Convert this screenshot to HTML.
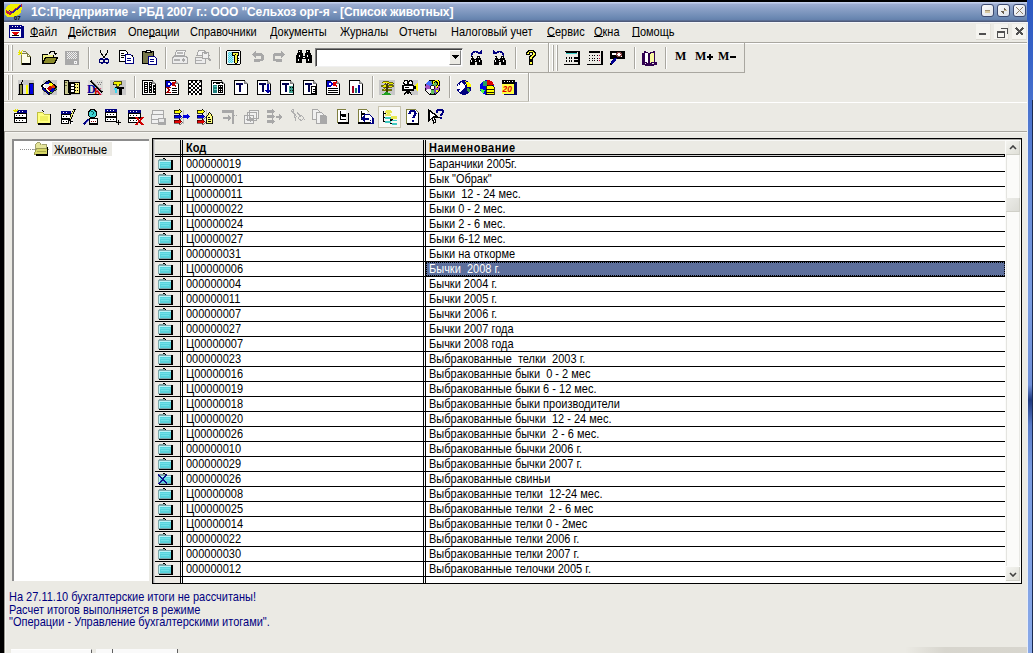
<!DOCTYPE html><html><head><meta charset="utf-8"><style>
*{margin:0;padding:0;box-sizing:border-box}
html,body{width:1033px;height:653px;overflow:hidden;background:#ebeae4;font-family:"Liberation Sans",sans-serif;font-size:11px;color:#000;position:relative}
.a{position:absolute}
.t{white-space:nowrap;line-height:14px;transform:scaleY(1.13);transform-origin:0 0}
</style></head><body>
<div class="a" style="left:0px;top:0px;width:4px;height:653px;background:#000;"></div>
<div class="a" style="left:0px;top:0px;width:1033px;height:2px;background:#000;"></div>
<div class="a" style="left:4px;top:2px;width:1023px;height:20px;background:;background:linear-gradient(#c4d0ec 0px,#c4d0ec 1px,#9eaed2 2px,#8da2c8 6px,#6a88b2 16px,#6580ac 18px,#4e5a78 19px)"></div>
<div class="a" style="left:1027px;top:0px;width:6px;height:653px;background:;background:linear-gradient(#2c58c0 0px,#3864c8 60px,#6a8ed8 200px,#7b9de0 300px,#7090d8 385px,#203a80 400px,#5a7cc8 425px,#7b9de0 470px,#88a8e8 653px)"></div>
<div class="a" style="left:1032px;top:100px;width:1px;height:553px;background:#1a2a50;"></div>
<div class="a" style="left:1027px;top:22px;width:1px;height:631px;background:#e8eef8;"></div>
<div class="a t" style="left:31px;top:4.5px;color:#fff;font-weight:bold;font-size:12px;letter-spacing:-0.09px;transform:none">1С:Предприятие - РБД 2007 г.: ООО "Сельхоз орг-я - [Список животных]</div>
<div class="a" style="left:4px;top:22px;width:1023px;height:1px;background:#f4f6fa;"></div>
<div class="a" style="left:4px;top:42px;width:1023px;height:1px;background:#a9a7a0;"></div>
<div class="a" style="left:4px;top:43px;width:1023px;height:1px;background:#fff;"></div>
<div class="a" style="left:4px;top:72px;width:741px;height:1px;background:#a9a7a0;"></div>
<div class="a" style="left:4px;top:73px;width:525px;height:1px;background:#fff;"></div>
<div class="a" style="left:4px;top:101px;width:525px;height:1px;background:#c8c6bc;"></div>
<div class="a" style="left:4px;top:102px;width:1023px;height:1px;background:#fff;"></div>
<div class="a" style="left:4px;top:131px;width:1023px;height:1px;background:#a9a7a0;"></div>
<div class="a" style="left:4px;top:131px;width:1px;height:522px;background:#9a9890;"></div>
<div class="a" style="left:5px;top:132px;width:1px;height:521px;background:#f6f6f2;"></div>
<div class="a" style="left:5px;top:132px;width:1022px;height:1px;background:#f6f6f2;"></div>
<div class="a" style="left:548px;top:43px;width:1px;height:29px;background:#a9a7a0;"></div>
<div class="a" style="left:549px;top:43px;width:1px;height:29px;background:#fff;"></div>
<div class="a" style="left:744px;top:43px;width:1px;height:29px;background:#a9a7a0;"></div>
<div class="a" style="left:528px;top:73px;width:1px;height:28px;background:#a9a7a0;"></div>
<div class="a" style="left:529px;top:73px;width:1px;height:28px;background:#fff;"></div>
<div class="a" style="left:7px;top:45px;width:1px;height:26px;background:#fff;"></div>
<div class="a" style="left:8px;top:45px;width:1px;height:26px;background:#a9a7a0;"></div>
<div class="a" style="left:11px;top:45px;width:1px;height:26px;background:#fff;"></div>
<div class="a" style="left:12px;top:45px;width:1px;height:26px;background:#a9a7a0;"></div>
<div class="a" style="left:552px;top:45px;width:1px;height:26px;background:#fff;"></div>
<div class="a" style="left:553px;top:45px;width:1px;height:26px;background:#a9a7a0;"></div>
<div class="a" style="left:556px;top:45px;width:1px;height:26px;background:#fff;"></div>
<div class="a" style="left:557px;top:45px;width:1px;height:26px;background:#a9a7a0;"></div>
<div class="a" style="left:7px;top:75px;width:1px;height:25px;background:#fff;"></div>
<div class="a" style="left:8px;top:75px;width:1px;height:25px;background:#a9a7a0;"></div>
<div class="a" style="left:11px;top:75px;width:1px;height:25px;background:#fff;"></div>
<div class="a" style="left:12px;top:75px;width:1px;height:25px;background:#a9a7a0;"></div>
<div class="a" style="left:88px;top:47px;width:1px;height:22px;background:#a9a7a0;"></div>
<div class="a" style="left:89px;top:47px;width:1px;height:22px;background:#fff;"></div>
<div class="a" style="left:165px;top:47px;width:1px;height:22px;background:#a9a7a0;"></div>
<div class="a" style="left:166px;top:47px;width:1px;height:22px;background:#fff;"></div>
<div class="a" style="left:219px;top:47px;width:1px;height:22px;background:#a9a7a0;"></div>
<div class="a" style="left:220px;top:47px;width:1px;height:22px;background:#fff;"></div>
<div class="a" style="left:515px;top:47px;width:1px;height:22px;background:#a9a7a0;"></div>
<div class="a" style="left:516px;top:47px;width:1px;height:22px;background:#fff;"></div>
<div class="a" style="left:634px;top:47px;width:1px;height:22px;background:#a9a7a0;"></div>
<div class="a" style="left:635px;top:47px;width:1px;height:22px;background:#fff;"></div>
<div class="a" style="left:665px;top:47px;width:1px;height:22px;background:#a9a7a0;"></div>
<div class="a" style="left:666px;top:47px;width:1px;height:22px;background:#fff;"></div>
<div class="a" style="left:134px;top:76px;width:1px;height:22px;background:#a9a7a0;"></div>
<div class="a" style="left:135px;top:76px;width:1px;height:22px;background:#fff;"></div>
<div class="a" style="left:372px;top:76px;width:1px;height:22px;background:#a9a7a0;"></div>
<div class="a" style="left:373px;top:76px;width:1px;height:22px;background:#fff;"></div>
<div class="a" style="left:449px;top:76px;width:1px;height:22px;background:#a9a7a0;"></div>
<div class="a" style="left:450px;top:76px;width:1px;height:22px;background:#fff;"></div>
<svg class="a" style="left:18px;top:50px" width="16" height="16" viewBox="0 0 16 16" shape-rendering="crispEdges"><path d="M3.5 3.5h6l3 3v7.5h-9z" fill="#fdfde8" stroke="#808040" stroke-width="1" /><path d="M12.5 6.5v7.5h-9" fill="none" stroke="#000" stroke-width="1.3" /><path d="M9.5 3.5v3h3" fill="none" stroke="#808040" stroke-width="1" /><path d="M0 2.5h3M1.5 0.5l1 2.5M4.5 0.5l-2 2.5M0.5 5l2-2M3 3l1 2" fill="none" stroke="#e8e800" stroke-width="1.1" /><path d="M5 1.5h3l1 1" fill="none" stroke="#808040" stroke-width="0.9" /><rect x="2" y="3" width="1" height="1" fill="#808040"/></svg>
<svg class="a" style="left:42px;top:50px" width="16" height="16" viewBox="0 0 16 16" shape-rendering="crispEdges"><path d="M0.5 13.5v-9.5h4l1 1h6v2" fill="#f0f088" stroke="#000" stroke-width="1" /><rect x="1" y="5" width="10" height="3" fill="#f0f088"/><path d="M0.5 13.5l3-6h12l-3 6z" fill="#8a8a2a" stroke="#000" stroke-width="1" /><path d="M7 4c1-3 4.5-3.5 6-1.5" fill="none" stroke="#000" stroke-width="1.2" /><path d="M11 2.5h4.5l-2.2 3z" fill="#000" stroke="none" stroke-width="1" /></svg>
<svg class="a" style="left:64px;top:50px" width="16" height="16" viewBox="0 0 16 16" shape-rendering="crispEdges"><rect x="1" y="1" width="14" height="14" fill="#a9a9a9"/><rect x="3" y="2" width="1" height="1" fill="#f0f0f0"/><rect x="5" y="2" width="1" height="1" fill="#f0f0f0"/><rect x="7" y="2" width="1" height="1" fill="#f0f0f0"/><rect x="9" y="2" width="1" height="1" fill="#f0f0f0"/><rect x="11" y="2" width="1" height="1" fill="#f0f0f0"/><rect x="4" y="3" width="1" height="1" fill="#f0f0f0"/><rect x="6" y="3" width="1" height="1" fill="#f0f0f0"/><rect x="8" y="3" width="1" height="1" fill="#f0f0f0"/><rect x="10" y="3" width="1" height="1" fill="#f0f0f0"/><rect x="12" y="3" width="1" height="1" fill="#f0f0f0"/><rect x="3" y="4" width="1" height="1" fill="#f0f0f0"/><rect x="5" y="4" width="1" height="1" fill="#f0f0f0"/><rect x="7" y="4" width="1" height="1" fill="#f0f0f0"/><rect x="9" y="4" width="1" height="1" fill="#f0f0f0"/><rect x="11" y="4" width="1" height="1" fill="#f0f0f0"/><rect x="4" y="5" width="1" height="1" fill="#f0f0f0"/><rect x="6" y="5" width="1" height="1" fill="#f0f0f0"/><rect x="8" y="5" width="1" height="1" fill="#f0f0f0"/><rect x="10" y="5" width="1" height="1" fill="#f0f0f0"/><rect x="12" y="5" width="1" height="1" fill="#f0f0f0"/><rect x="3" y="6" width="1" height="1" fill="#f0f0f0"/><rect x="5" y="6" width="1" height="1" fill="#f0f0f0"/><rect x="7" y="6" width="1" height="1" fill="#f0f0f0"/><rect x="9" y="6" width="1" height="1" fill="#f0f0f0"/><rect x="11" y="6" width="1" height="1" fill="#f0f0f0"/><rect x="4" y="7" width="1" height="1" fill="#f0f0f0"/><rect x="6" y="7" width="1" height="1" fill="#f0f0f0"/><rect x="8" y="7" width="1" height="1" fill="#f0f0f0"/><rect x="10" y="7" width="1" height="1" fill="#f0f0f0"/><rect x="12" y="7" width="1" height="1" fill="#f0f0f0"/><rect x="3" y="8" width="1" height="1" fill="#f0f0f0"/><rect x="5" y="8" width="1" height="1" fill="#f0f0f0"/><rect x="7" y="8" width="1" height="1" fill="#f0f0f0"/><rect x="9" y="8" width="1" height="1" fill="#f0f0f0"/><rect x="11" y="8" width="1" height="1" fill="#f0f0f0"/><rect x="10" y="11" width="3" height="3" fill="#f4f4f4"/><rect x="11" y="12" width="1" height="1" fill="#a9a9a9"/></svg>
<svg class="a" style="left:99px;top:50px" width="16" height="16" viewBox="0 0 16 16" shape-rendering="crispEdges"><path d="M1.5 0v2l4 6.5M8.5 0v2l-4 6.5" fill="none" stroke="#000" stroke-width="1.1" /><circle cx="2.6" cy="11" r="2.1" fill="none" stroke="#000070" stroke-width="1.2"/><circle cx="7.6" cy="11" r="2.1" fill="none" stroke="#000070" stroke-width="1.2"/></svg>
<svg class="a" style="left:119px;top:50px" width="16" height="16" viewBox="0 0 16 16" shape-rendering="crispEdges"><path d="M0.5 0.5h6l2 2v8.5h-8z" fill="#fff" stroke="#000" stroke-width="1" /><rect x="2" y="3" width="3" height="1" fill="#000"/><rect x="2" y="5" width="4" height="1" fill="#000"/><rect x="2" y="7" width="3" height="1" fill="#000"/><path d="M6.5 4.5h5l2.5 2.5v6.5h-7.5z" fill="#fff" stroke="#000080" stroke-width="1" /><rect x="8" y="8" width="4" height="1" fill="#000080"/><rect x="8" y="10" width="4" height="1" fill="#000080"/><rect x="12.5" y="5" width="1" height="2" fill="#000"/></svg>
<svg class="a" style="left:142px;top:50px" width="16" height="16" viewBox="0 0 16 16" shape-rendering="crispEdges"><path d="M0.5 1.5h11v11.5h-11z" fill="#77774a" stroke="#000" stroke-width="1" /><path d="M3.5 2.5l1.5-2h3l1.5 2z" fill="#fff" stroke="#000" stroke-width="1" /><path d="M6.5 6.5h6l2 2v5.5h-8z" fill="#fff" stroke="#000080" stroke-width="1" /><rect x="8" y="9" width="4" height="1" fill="#000080"/><rect x="8" y="11" width="4" height="1" fill="#000080"/></svg>
<svg class="a" style="left:172px;top:50px" width="16" height="16" viewBox="0 0 16 16" shape-rendering="crispEdges"><path d="M4.5 0.5h9l-1.5 5h-9z" fill="#f4f4f4" stroke="#a8a8a8" stroke-width="1" /><path d="M5 2h6M4.5 3.5h6" fill="none" stroke="#b8b8b8" stroke-width="1" /><path d="M1.5 6.5h13l1 2v5h-15v-5z" fill="#ececec" stroke="#a8a8a8" stroke-width="1" /><rect x="2" y="9" width="6" height="2" fill="#b0b0b0"/><circle cx="11.5" cy="10" r="1.6" fill="#a8a8a8"/><rect x="3" y="13" width="10" height="1" fill="#a8a8a8"/></svg>
<svg class="a" style="left:195px;top:50px" width="16" height="16" viewBox="0 0 16 16" shape-rendering="crispEdges"><path d="M3.5 0.5h6l-1.5 5h-6z" fill="#f4f4f4" stroke="#a8a8a8" stroke-width="1" /><path d="M0.5 7.5h10v6h-10z" fill="#ececec" stroke="#a8a8a8" stroke-width="1" /><rect x="1" y="10" width="6" height="1" fill="#b0b0b0"/><rect x="2" y="13" width="8" height="1" fill="#a8a8a8"/><circle cx="10.5" cy="5.5" r="3.5" fill="#f0f0f0" stroke="#a8a8a8" stroke-width="1.2"/><path d="M13 8l3 3" fill="none" stroke="#a8a8a8" stroke-width="1.8" /><path d="M9.5 4a1 1 0 0 1 2 0" fill="none" stroke="#a8a8a8" stroke-width="1" /></svg>
<svg class="a" style="left:226px;top:50px" width="16" height="16" viewBox="0 0 16 16" shape-rendering="crispEdges"><rect x="0" y="0" width="15" height="15" fill="#000"/><rect x="1" y="1" width="13" height="13" fill="#f0fafa"/><rect x="0" y="0" width="1" height="1" fill="#ebeae4"/><rect x="14" y="0" width="1" height="1" fill="#ebeae4"/><rect x="0" y="14" width="1" height="1" fill="#ebeae4"/><rect x="14" y="14" width="1" height="1" fill="#ebeae4"/><rect x="2" y="2" width="5" height="11" fill="#50cce0"/><rect x="2" y="2" width="1" height="1" fill="#a8f0f8"/><rect x="4" y="2" width="1" height="1" fill="#a8f0f8"/><rect x="6" y="2" width="1" height="1" fill="#a8f0f8"/><rect x="3" y="3" width="1" height="1" fill="#a8f0f8"/><rect x="5" y="3" width="1" height="1" fill="#a8f0f8"/><rect x="7" y="3" width="1" height="1" fill="#a8f0f8"/><rect x="2" y="4" width="1" height="1" fill="#a8f0f8"/><rect x="4" y="4" width="1" height="1" fill="#a8f0f8"/><rect x="6" y="4" width="1" height="1" fill="#a8f0f8"/><rect x="3" y="5" width="1" height="1" fill="#a8f0f8"/><rect x="5" y="5" width="1" height="1" fill="#a8f0f8"/><rect x="7" y="5" width="1" height="1" fill="#a8f0f8"/><rect x="2" y="6" width="1" height="1" fill="#a8f0f8"/><rect x="4" y="6" width="1" height="1" fill="#a8f0f8"/><rect x="6" y="6" width="1" height="1" fill="#a8f0f8"/><rect x="3" y="7" width="1" height="1" fill="#a8f0f8"/><rect x="5" y="7" width="1" height="1" fill="#a8f0f8"/><rect x="7" y="7" width="1" height="1" fill="#a8f0f8"/><rect x="2" y="8" width="1" height="1" fill="#a8f0f8"/><rect x="4" y="8" width="1" height="1" fill="#a8f0f8"/><rect x="6" y="8" width="1" height="1" fill="#a8f0f8"/><rect x="3" y="9" width="1" height="1" fill="#a8f0f8"/><rect x="5" y="9" width="1" height="1" fill="#a8f0f8"/><rect x="7" y="9" width="1" height="1" fill="#a8f0f8"/><rect x="2" y="10" width="1" height="1" fill="#a8f0f8"/><rect x="4" y="10" width="1" height="1" fill="#a8f0f8"/><rect x="6" y="10" width="1" height="1" fill="#a8f0f8"/><rect x="3" y="11" width="1" height="1" fill="#a8f0f8"/><rect x="5" y="11" width="1" height="1" fill="#a8f0f8"/><rect x="7" y="11" width="1" height="1" fill="#a8f0f8"/><rect x="2" y="12" width="1" height="1" fill="#a8f0f8"/><rect x="4" y="12" width="1" height="1" fill="#a8f0f8"/><rect x="6" y="12" width="1" height="1" fill="#a8f0f8"/><path d="M6.5 2.5h6v2.5l-1 1v6.5l-1.5 1.5-1.5-1.5v-6.5l-2-1z" fill="#f8f840" stroke="#000" stroke-width="1" /><rect x="9" y="3.5" width="1" height="1" fill="#000"/><rect x="11" y="8" width="2" height="1" fill="#000"/><rect x="11" y="10" width="2" height="1" fill="#000"/></svg>
<svg class="a" style="left:251px;top:50px" width="16" height="16" viewBox="0 0 16 16" shape-rendering="crispEdges"><path d="M0.5 4.5l4-4v2.5h4.5a4.2 4.2 0 0 1 0 8.5h-6v-2.8h6a1.4 1.4 0 0 0 0-2.8h-4.5v2.6z" fill="#a8a8a8" stroke="none" stroke-width="1" /></svg>
<svg class="a" style="left:273px;top:50px" width="16" height="16" viewBox="0 0 16 16" shape-rendering="crispEdges"><path d="M11.5 4.5l-4-4v2.5h-4.5a4.2 4.2 0 0 0 0 8.5h6v-2.8h-6a1.4 1.4 0 0 1 0-2.8h4.5v2.6z" fill="#a8a8a8" stroke="none" stroke-width="1" /></svg>
<svg class="a" style="left:296px;top:50px" width="16" height="16" viewBox="0 0 16 16" shape-rendering="crispEdges"><path d="M2 0h4v3h1v3h2v-3h1v-3h4v3h1v2h1v8h-6v-4h-4v4h-6v-8h1v-2h1z" fill="#000" stroke="none" stroke-width="1" /><rect x="3" y="5" width="1" height="2" fill="#fff"/><rect x="11" y="5" width="1" height="2" fill="#fff"/><rect x="2" y="9" width="1" height="2" fill="#fff"/><rect x="12" y="9" width="1" height="2" fill="#fff"/><rect x="7" y="7" width="2" height="1" fill="#fff"/><rect x="3" y="1" width="1" height="1" fill="#fff"/><rect x="11" y="1" width="1" height="1" fill="#fff"/></svg>
<div class="a" style="left:315px;top:48px;width:148px;height:19px;background:#fff;border-top:1px solid #808080;border-left:1px solid #808080;border-right:1px solid #f0f0f0;border-bottom:1px solid #f0f0f0;box-shadow:inset 1px 1px 0 #404040"></div>
<div class="a" style="left:449px;top:50px;width:12px;height:15px;background:#ebeae4;border-right:1px solid #808080;border-bottom:1px solid #808080;border-top:1px solid #fff;border-left:1px solid #fff"></div>
<svg class="a" style="left:452px;top:55px" width="8" height="5" viewBox="0 0 8 5" shape-rendering="crispEdges"><path d="M0 0h7l-3.5 4z" fill="#000" stroke="none" stroke-width="1" /></svg>
<svg class="a" style="left:468px;top:50px" width="16" height="16" viewBox="0 0 16 16" shape-rendering="crispEdges"><path d="M2 6h3v2h1v1h2v-1h1v-2h3v2h1v2h1v5h-5v-3h-2v3h-5v-5h1v-2h1z" fill="#000" stroke="none" stroke-width="1" /><rect x="3" y="10" width="1" height="2" fill="#fff"/><rect x="11" y="10" width="1" height="2" fill="#fff"/><rect x="7" y="10" width="1" height="1" fill="#fff"/><rect x="3" y="7" width="1" height="1" fill="#fff"/><rect x="10" y="7" width="1" height="1" fill="#fff"/><path d="M3.5 5.5c0-4 6-5.5 8-1.5" fill="none" stroke="#000080" stroke-width="1.5" /><path d="M9 4h5v-4z" fill="#000080" stroke="none" stroke-width="1" /></svg>
<svg class="a" style="left:492px;top:50px" width="16" height="16" viewBox="0 0 16 16" shape-rendering="crispEdges"><path d="M2 6h3v2h1v1h2v-1h1v-2h3v2h1v2h1v5h-5v-3h-2v3h-5v-5h1v-2h1z" fill="#000" stroke="none" stroke-width="1" /><rect x="3" y="10" width="1" height="2" fill="#fff"/><rect x="11" y="10" width="1" height="2" fill="#fff"/><rect x="7" y="10" width="1" height="1" fill="#fff"/><rect x="3" y="7" width="1" height="1" fill="#fff"/><rect x="10" y="7" width="1" height="1" fill="#fff"/><path d="M11.5 5.5c0-4-6-5.5-8-1.5" fill="none" stroke="#000080" stroke-width="1.5" /><path d="M6 4h-5v-4z" fill="#000080" stroke="none" stroke-width="1" /></svg>
<svg class="a" style="left:524px;top:50px" width="16" height="16" viewBox="0 0 16 16" shape-rendering="crispEdges"><path d="M2.5 4.5c0-3 2.5-4 4.5-4s4.5 1 4.5 3.5c0 2.5-3 2.5-3 5v1h-3v-1.5c0-3 3-3 3-4.5c0-1-0.5-1.5-1.5-1.5s-1.5 0.6-1.5 2z" fill="#ffff40" stroke="#000" stroke-width="1.2" /><path d="M5.5 11.5h3v3h-3z" fill="#ffff40" stroke="#000" stroke-width="1.2" /></svg>
<svg class="a" style="left:564px;top:50px" width="16" height="16" viewBox="0 0 16 16" shape-rendering="crispEdges"><path d="M0.5 1.5h14.5v12.5h-15" fill="none" stroke="#000" stroke-width="1" /><path d="M15 1v13.5h-15" fill="none" stroke="#000" stroke-width="1.5" /><rect x="2" y="2" width="11" height="2" fill="#40d0c8"/><rect x="2" y="2" width="11" height="0.8" fill="#000"/><rect x="2.0" y="7" width="1.3" height="1.5" fill="#000"/><rect x="4.5" y="7" width="1.3" height="1.5" fill="#000"/><rect x="7.0" y="7" width="1.3" height="1.5" fill="#000"/><rect x="9.5" y="7" width="1.3" height="1.5" fill="#000"/><rect x="2.0" y="10" width="1.3" height="1.5" fill="#000"/><rect x="4.5" y="10" width="1.3" height="1.5" fill="#000"/><rect x="7.0" y="10" width="1.3" height="1.5" fill="#000"/><rect x="9.5" y="10" width="1.3" height="1.5" fill="#000"/><rect x="11" y="7" width="2.5" height="1.5" fill="#000"/><rect x="11" y="10" width="2.5" height="1.5" fill="#000"/></svg>
<svg class="a" style="left:587px;top:50px" width="16" height="16" viewBox="0 0 16 16" shape-rendering="crispEdges"><path d="M15 1v13.5h-15" fill="none" stroke="#000" stroke-width="1.5" /><rect x="2" y="1" width="11" height="1.6" fill="#000"/><rect x="3" y="0.5" width="1" height="2" fill="#000"/><rect x="7" y="0.5" width="1" height="2" fill="#000"/><rect x="11" y="0.5" width="1" height="2" fill="#000"/><rect x="2.0" y="5.0" width="1" height="1" fill="#000"/><rect x="2.0" y="7.5" width="1" height="1" fill="#000"/><rect x="2.0" y="10.0" width="1" height="1" fill="#000"/><rect x="4.5" y="5.0" width="1" height="1" fill="#000"/><rect x="4.5" y="7.5" width="1" height="1" fill="#000"/><rect x="4.5" y="10.0" width="1" height="1" fill="#000"/><rect x="7.0" y="5.0" width="1" height="1" fill="#000"/><rect x="7.0" y="7.5" width="1" height="1" fill="#000"/><rect x="7.0" y="10.0" width="1" height="1" fill="#000"/><rect x="9.5" y="5.0" width="1" height="1" fill="#000"/><rect x="9.5" y="7.5" width="1" height="1" fill="#000"/><rect x="9.5" y="10.0" width="1" height="1" fill="#000"/><rect x="12.0" y="5.0" width="1" height="1" fill="#c00040"/><rect x="12.0" y="7.5" width="1" height="1" fill="#c00040"/><rect x="12.0" y="10.0" width="1" height="1" fill="#c00040"/></svg>
<svg class="a" style="left:609px;top:50px" width="16" height="16" viewBox="0 0 16 16" shape-rendering="crispEdges"><rect x="1" y="1" width="15" height="8" fill="#000"/><rect x="3" y="3" width="4" height="2" fill="#fff"/><rect x="8" y="3" width="5" height="4" fill="#fff"/><circle cx="10" cy="4.5" r="2.2" fill="none" stroke="#804040" stroke-width="1"/><path d="M7 8l-5 6" fill="none" stroke="#000090" stroke-width="2.5" /><path d="M2 14l-1 1" fill="none" stroke="#000" stroke-width="1.5" /></svg>
<svg class="a" style="left:642px;top:50px" width="16" height="16" viewBox="0 0 16 16" shape-rendering="crispEdges"><path d="M1 3v11l6 1.5 7-1.5v-2" fill="none" stroke="#300050" stroke-width="2" /><path d="M2.5 1.5l4.5 2v10.5l-4.5-2z" fill="#fff" stroke="#300050" stroke-width="1.2" /><path d="M7 3.5l5.5-2v10.5l-5.5 2z" fill="#f8f8a0" stroke="#300050" stroke-width="1.2" /></svg>
<div class="a" style="left:675px;top:49px;font:bold 12px 'Liberation Serif',serif;white-space:nowrap">M</div><div class="a" style="left:695px;top:49px;font:bold 12px 'Liberation Serif',serif;white-space:nowrap">M</div><div class="a" style="left:718px;top:49px;font:bold 12px 'Liberation Serif',serif;white-space:nowrap">M</div><div class="a" style="left:707px;top:56px;width:6px;height:2px;background:#000;"></div>
<div class="a" style="left:709px;top:54px;width:2px;height:6px;background:#000;"></div>
<div class="a" style="left:730px;top:56px;width:6px;height:2px;background:#000;"></div>
<svg class="a" style="left:18px;top:80px" width="16" height="16" viewBox="0 0 16 16" shape-rendering="crispEdges"><rect x="0" y="0" width="16" height="15" fill="#c8c8c8"/><rect x="1" y="4" width="3" height="10" fill="#8a8a40"/><path d="M1 4h3v10h-3z" fill="none" stroke="#000" stroke-width="1" /><rect x="5" y="5" width="3" height="9" fill="#e0e0e0"/><rect x="8" y="5" width="2" height="9" fill="#ffff00"/><rect x="11" y="3" width="4" height="11" fill="#0000e0"/><path d="M11 3h4v11h-4z" fill="none" stroke="#000" stroke-width="0.8" /><path d="M3 4l2-4" fill="none" stroke="#000" stroke-width="1.2" /><rect x="0" y="14" width="16" height="1" fill="#000"/></svg>
<svg class="a" style="left:41px;top:80px" width="16" height="16" viewBox="0 0 16 16" shape-rendering="crispEdges"><rect x="2" y="0" width="14" height="15" fill="#c8c8c8"/><path d="M0.5 6l7-5.5 8 6-7 6z" fill="#ffffff" stroke="#000" stroke-width="1.2" /><path d="M1 6l7 7v2l-7-6z" fill="#0000c0" stroke="#000" stroke-width="0.8" /><path d="M8 13l8-6v2l-8 6z" fill="#60c040" stroke="#000" stroke-width="0.8" /><path d="M4 3.5l3.5-2.5 2 1.5-3.5 2.5z" fill="#0000a0" stroke="none" stroke-width="1" /><path d="M9.5 2.5l2.5 2-3.5 2.5-2.5-2z" fill="#ffff00" stroke="none" stroke-width="1" /><path d="M12 4.5l3 2.5-3.5 2.5-2.5-2z" fill="#e04000" stroke="none" stroke-width="1" /><path d="M3 6l3.5-2.5 2.5 2-3.5 2.5z" fill="#e8e8e8" stroke="none" stroke-width="1" /><path d="M6 8.5l3-2.5 2.5 2-3 2.5z" fill="#c00000" stroke="none" stroke-width="1" /><path d="M1.5 6l3 2.5 3.5 3-0.5 0.5-6-5.5z" fill="#ffff80" stroke="none" stroke-width="1" /><path d="M9 10.5l3-2.5 2 1.5-3 2.5z" fill="#0000c0" stroke="none" stroke-width="1" /></svg>
<svg class="a" style="left:64px;top:80px" width="16" height="16" viewBox="0 0 16 16" shape-rendering="crispEdges"><rect x="0" y="0" width="16" height="15" fill="#c8c8c8"/><path d="M0.5 0.5h4v12l2 2h-6z" fill="#c8c890" stroke="#000" stroke-width="1" /><rect x="1" y="2" width="2" height="1" fill="#606030"/><rect x="1" y="5" width="2" height="1" fill="#606030"/><rect x="5" y="2" width="11" height="12" fill="#000"/><rect x="6.5" y="4" width="3" height="1.6" fill="#fff"/><rect x="6.5" y="7" width="3" height="1.6" fill="#fff"/><rect x="6.5" y="10" width="3" height="1.6" fill="#fff"/><rect x="10.5" y="3" width="4.5" height="10" fill="#f8f080"/><rect x="11" y="4" width="1" height="1" fill="#000"/><rect x="13" y="4" width="1" height="1" fill="#000"/><rect x="11" y="7" width="1" height="1" fill="#000"/><rect x="13" y="7" width="1" height="1" fill="#000"/><rect x="11" y="10" width="1" height="1" fill="#000"/><rect x="13" y="10" width="1" height="1" fill="#000"/></svg>
<svg class="a" style="left:87px;top:80px" width="16" height="16" viewBox="0 0 16 16" shape-rendering="crispEdges"><rect x="1" y="0" width="15" height="15" fill="#dcdcd8"/><text x="0" y="13" font-family="Liberation Serif" font-weight="bold" font-size="12" fill="#0000a0">D</text><text x="7" y="15" font-family="Liberation Serif" font-weight="bold" font-size="10" fill="#d00000">K</text><path d="M4 1l11.5 11.5" fill="none" stroke="#000" stroke-width="2" /><path d="M5 0.5l10 10" fill="none" stroke="#fff" stroke-width="0.6" /><rect x="1" y="14" width="11" height="1" fill="#000"/><rect x="10" y="2" width="1" height="1" fill="#808080"/><rect x="12" y="2" width="1" height="1" fill="#808080"/><rect x="14" y="2" width="1" height="1" fill="#808080"/><rect x="11" y="4" width="1" height="1" fill="#808080"/><rect x="13" y="4" width="1" height="1" fill="#808080"/></svg>
<svg class="a" style="left:110px;top:80px" width="16" height="16" viewBox="0 0 16 16" shape-rendering="crispEdges"><rect x="0" y="0" width="16" height="15" fill="#c8c8c8"/><path d="M3.5 1.5h8v2.5h-2.5v2h-3v-2h-2.5z" fill="#f0f000" stroke="#404000" stroke-width="0.9" /><path d="M5 6.5h9v2h-2.5v6h-2.5v-6h-4z" fill="#000" stroke="none" stroke-width="1" /><path d="M4 8h2.5v4.5h-1.5v-2.5h-1z" fill="#40d8f0" stroke="none" stroke-width="1" /><rect x="3" y="4" width="1" height="1" fill="#000"/></svg>
<svg class="a" style="left:142px;top:80px" width="16" height="16" viewBox="0 0 16 16" shape-rendering="crispEdges"><path d="M0.5 0.5h10l3 3v11h-13z" fill="#fff" stroke="#000" stroke-width="1.2" /><path d="M10.5 0.5v3h3" fill="#a0a0a0" stroke="#808080" stroke-width="1" /><path d="M13.5 3.5v11h-13" fill="none" stroke="#000" stroke-width="1.6" /><rect x="2" y="2" width="4" height="11" fill="#000"/><rect x="7" y="2" width="3" height="11" fill="#000"/><rect x="3" y="5" width="2" height="1" fill="#fff"/><rect x="3" y="5" width="2" height="1" fill="#fff"/><rect x="3" y="7" width="2" height="1" fill="#fff"/><rect x="3" y="9" width="2" height="1" fill="#fff"/><rect x="3" y="11" width="2" height="1" fill="#fff"/><rect x="8" y="5" width="1" height="1" fill="#fff"/><rect x="8" y="8" width="1" height="1" fill="#fff"/><rect x="8" y="11" width="1" height="1" fill="#fff"/><rect x="3" y="3" width="2" height="1" fill="#fff"/><rect x="8" y="3" width="1" height="1" fill="#fff"/><rect x="11" y="5" width="2" height="8" fill="#000"/><rect x="11.5" y="7" width="1" height="1" fill="#fff"/><rect x="11.5" y="10" width="1" height="1" fill="#fff"/></svg>
<svg class="a" style="left:165px;top:80px" width="16" height="16" viewBox="0 0 16 16" shape-rendering="crispEdges"><path d="M0.5 0.5h10l3 3v11h-13z" fill="#fff" stroke="#000" stroke-width="1.2" /><path d="M10.5 0.5v3h3" fill="#a0a0a0" stroke="#808080" stroke-width="1" /><path d="M13.5 3.5v11h-13" fill="none" stroke="#000" stroke-width="1.6" /><path d="M2 2h2c1.5 0 2 1 2 2s-0.5 2-2 2h-2z" fill="none" stroke="#0000c0" stroke-width="1.4" /><path d="M8 2v4M8 4l3-2M8 4l3 2" fill="none" stroke="#c00000" stroke-width="1.4" /><path d="M6 7.5h-4l2.5 2.5-2.5 2.5h4" fill="none" stroke="#a00000" stroke-width="1.5" /><rect x="7" y="8" width="5" height="1" fill="#000"/><rect x="7" y="10" width="5" height="1" fill="#000"/><rect x="7" y="12" width="5" height="1" fill="#000"/></svg>
<svg class="a" style="left:188px;top:80px" width="16" height="16" viewBox="0 0 16 16" shape-rendering="crispEdges"><rect x="0" y="0" width="14" height="15" fill="#000"/><rect x="1" y="1" width="2" height="2" fill="#fff"/><rect x="1" y="5" width="2" height="2" fill="#fff"/><rect x="1" y="9" width="2" height="2" fill="#fff"/><rect x="1" y="13" width="2" height="2" fill="#fff"/><rect x="3" y="3" width="2" height="2" fill="#fff"/><rect x="3" y="7" width="2" height="2" fill="#fff"/><rect x="3" y="11" width="2" height="2" fill="#fff"/><rect x="5" y="1" width="2" height="2" fill="#fff"/><rect x="5" y="5" width="2" height="2" fill="#fff"/><rect x="5" y="9" width="2" height="2" fill="#fff"/><rect x="5" y="13" width="2" height="2" fill="#fff"/><rect x="7" y="3" width="2" height="2" fill="#fff"/><rect x="7" y="7" width="2" height="2" fill="#fff"/><rect x="7" y="11" width="2" height="2" fill="#fff"/><rect x="9" y="1" width="2" height="2" fill="#fff"/><rect x="9" y="5" width="2" height="2" fill="#fff"/><rect x="9" y="9" width="2" height="2" fill="#fff"/><rect x="9" y="13" width="2" height="2" fill="#fff"/><rect x="11" y="3" width="2" height="2" fill="#fff"/><rect x="11" y="7" width="2" height="2" fill="#fff"/><rect x="11" y="11" width="2" height="2" fill="#fff"/><path d="M10.5 0.5l3 3" fill="none" stroke="#a0a0a0" stroke-width="1" /></svg>
<svg class="a" style="left:211px;top:80px" width="16" height="16" viewBox="0 0 16 16" shape-rendering="crispEdges"><path d="M0.5 0.5h10l3 3v11h-13z" fill="#fff" stroke="#000" stroke-width="1.2" /><path d="M10.5 0.5v3h3" fill="#a0a0a0" stroke="#808080" stroke-width="1" /><path d="M13.5 3.5v11h-13" fill="none" stroke="#000" stroke-width="1.6" /><rect x="2" y="2" width="10" height="2" fill="#000"/><rect x="3" y="2.5" width="2" height="1" fill="#fff"/><rect x="9" y="2.5" width="2" height="1" fill="#fff"/><rect x="2" y="5" width="4" height="8" fill="#208080"/><rect x="2.5" y="6" width="3" height="1" fill="#60d0c0"/><rect x="2.5" y="9" width="3" height="1" fill="#60d0c0"/><rect x="7" y="5" width="5" height="8" fill="#000"/><rect x="8" y="6" width="1" height="1" fill="#fff"/><rect x="10" y="6" width="1" height="1" fill="#fff"/><rect x="8" y="9" width="1" height="1" fill="#fff"/><rect x="10" y="9" width="1" height="1" fill="#fff"/><rect x="8" y="11" width="1" height="1" fill="#fff"/><rect x="10" y="11" width="1" height="1" fill="#fff"/></svg>
<svg class="a" style="left:234px;top:80px" width="16" height="16" viewBox="0 0 16 16" shape-rendering="crispEdges"><path d="M0.5 0.5h10l3 3v11h-13z" fill="#fff" stroke="#000" stroke-width="1.2" /><path d="M10.5 0.5v3h3" fill="#a0a0a0" stroke="#808080" stroke-width="1" /><path d="M13.5 3.5v11h-13" fill="none" stroke="#000" stroke-width="1.6" /><path d="M2 3h7v2h-2.5v7h-2v-7h-2.5z" fill="#000050" stroke="none" stroke-width="1" /></svg>
<svg class="a" style="left:257px;top:80px" width="16" height="16" viewBox="0 0 16 16" shape-rendering="crispEdges"><path d="M0.5 0.5h10l3 3v11h-13z" fill="#fff" stroke="#000" stroke-width="1.2" /><path d="M10.5 0.5v3h3" fill="#a0a0a0" stroke="#808080" stroke-width="1" /><path d="M13.5 3.5v11h-13" fill="none" stroke="#000" stroke-width="1.6" /><path d="M2 3h7v2h-2.5v7h-2v-7h-2.5z" fill="#000050" stroke="none" stroke-width="1" /><path d="M11 4v8M9 10l2 2.5 2-2.5" fill="none" stroke="#0000a0" stroke-width="1.5" /></svg>
<svg class="a" style="left:280px;top:80px" width="16" height="16" viewBox="0 0 16 16" shape-rendering="crispEdges"><path d="M0.5 0.5h10l3 3v11h-13z" fill="#fff" stroke="#000" stroke-width="1.2" /><path d="M10.5 0.5v3h3" fill="#a0a0a0" stroke="#808080" stroke-width="1" /><path d="M13.5 3.5v11h-13" fill="none" stroke="#000" stroke-width="1.6" /><path d="M2 3h7v2h-2.5v7h-2v-7h-2.5z" fill="#000050" stroke="none" stroke-width="1" /><rect x="9" y="6" width="4" height="7" fill="#40a090"/><rect x="9.5" y="7" width="1" height="1" fill="#000"/><rect x="11.5" y="7" width="1" height="1" fill="#000"/><rect x="9.5" y="10" width="1" height="1" fill="#000"/><rect x="11.5" y="10" width="1" height="1" fill="#000"/></svg>
<svg class="a" style="left:303px;top:80px" width="16" height="16" viewBox="0 0 16 16" shape-rendering="crispEdges"><path d="M0.5 0.5h10l3 3v11h-13z" fill="#fff" stroke="#000" stroke-width="1.2" /><path d="M10.5 0.5v3h3" fill="#a0a0a0" stroke="#808080" stroke-width="1" /><path d="M13.5 3.5v11h-13" fill="none" stroke="#000" stroke-width="1.6" /><path d="M2 3h7v2h-2.5v7h-2v-7h-2.5z" fill="#000050" stroke="none" stroke-width="1" /><rect x="8" y="6" width="5" height="8" fill="#000"/><rect x="9" y="7" width="3" height="6" fill="#fff"/><path d="M9.5 9h2M9.5 11h2" fill="none" stroke="#000" stroke-width="1" /></svg>
<svg class="a" style="left:326px;top:80px" width="16" height="16" viewBox="0 0 16 16" shape-rendering="crispEdges"><path d="M0.5 0.5h10l3 3v11h-13z" fill="#fff" stroke="#000" stroke-width="1.2" /><path d="M10.5 0.5v3h3" fill="#a0a0a0" stroke="#808080" stroke-width="1" /><path d="M13.5 3.5v11h-13" fill="none" stroke="#000" stroke-width="1.6" /><path d="M2 2h2c1.5 0 2 1 2 2s-0.5 2-2 2h-2z" fill="none" stroke="#0000c0" stroke-width="1.4" /><path d="M8 2v4M8 4l3-2M8 4l3 2" fill="none" stroke="#e00000" stroke-width="1.4" /><rect x="2" y="8" width="10" height="1" fill="#000"/><rect x="2" y="10" width="10" height="1" fill="#000"/><rect x="2" y="12" width="10" height="1" fill="#000"/></svg>
<svg class="a" style="left:349px;top:80px" width="16" height="16" viewBox="0 0 16 16" shape-rendering="crispEdges"><path d="M0.5 0.5h10l3 3v11h-13z" fill="#fff" stroke="#000" stroke-width="1.2" /><path d="M10.5 0.5v3h3" fill="#a0a0a0" stroke="#808080" stroke-width="1" /><path d="M13.5 3.5v11h-13" fill="none" stroke="#000" stroke-width="1.6" /><rect x="3" y="6" width="1.8" height="7" fill="#a00020"/><rect x="6" y="8" width="1.8" height="5" fill="#208070"/><rect x="9" y="5" width="1.8" height="8" fill="#0000a0"/></svg>
<svg class="a" style="left:379px;top:80px" width="16" height="16" viewBox="0 0 16 16" shape-rendering="crispEdges"><rect x="0" y="0" width="16" height="15" fill="#c8c8c8"/><path d="M3 2.5c2-2 6-2 8 0 2-0.5 3 0 4 1-2 1-4 1-5 0.5" fill="#f0f000" stroke="#505000" stroke-width="0.8" /><path d="M2 6c2-1.5 5-1.5 7 0 2-1 4-1 6 0-2 1.5-4 1.5-6 0.5-2 1-5 1-7-0.5z" fill="#f0f000" stroke="#505000" stroke-width="0.8" /><path d="M3 10c2-1.5 4-1.5 5 0 2-1 4-1 5 0-2 1-4 1-5 0.5-1 0.5-3 0.5-5-0.5z" fill="#f0f000" stroke="#505000" stroke-width="0.8" /><rect x="6.0" y="3" width="1" height="1" fill="#603000"/><rect x="7.5" y="3" width="1" height="1" fill="#603000"/><rect x="9.0" y="3" width="1" height="1" fill="#603000"/><rect x="6.0" y="7" width="1" height="1" fill="#603000"/><rect x="7.5" y="7" width="1" height="1" fill="#603000"/><rect x="9.0" y="7" width="1" height="1" fill="#603000"/><rect x="7" y="4" width="1.5" height="8" fill="#404000"/><path d="M3 14.5l4-2.5 1.5 0 4 2.5z" fill="#20a020" stroke="none" stroke-width="1" /></svg>
<svg class="a" style="left:402px;top:80px" width="16" height="16" viewBox="0 0 16 16" shape-rendering="crispEdges"><rect x="9" y="0" width="7" height="15" fill="#c8c8c8"/><path d="M13 5l3-2v8l-3-2z" fill="#ffff00" stroke="none" stroke-width="1" /><circle cx="4" cy="2.8" r="2.2" fill="#fff" stroke="#000" stroke-width="1.2"/><circle cx="8.5" cy="2.8" r="2.2" fill="#fff" stroke="#000" stroke-width="1.2"/><path d="M1 5.5h10.5v4.5h-10.5z" fill="#fff" stroke="#000" stroke-width="1.5" /><rect x="11.5" y="6" width="2" height="3" fill="#000"/><rect x="3" y="7" width="4" height="1.2" fill="#000"/><path d="M6 10l-4 5M6 10l4 5M6 10v4" fill="none" stroke="#000" stroke-width="1.1" /></svg>
<svg class="a" style="left:425px;top:80px" width="16" height="16" viewBox="0 0 16 16" shape-rendering="crispEdges"><circle cx="7.5" cy="7.5" r="7" fill="#60c060" stroke="#000" stroke-width="1.3"/><path d="M7.5 7.5L1 4A7 7 0 0 1 6 0.5z" fill="#4070ff" stroke="none" stroke-width="1" /><path d="M7.5 7.5L1 10A7 7 0 0 1 1 4z" fill="#a050c0" stroke="none" stroke-width="1" /><path d="M7.5 7.5L14 10A7 7 0 0 1 10 14z" fill="#7050b0" stroke="none" stroke-width="1" /><path d="M7.5 7.5L5 14A7 7 0 0 1 1 10z" fill="#f0f0f0" stroke="none" stroke-width="1" /><path d="M7.5 7.5L14 4A7 7 0 0 1 14 10z" fill="#c060c0" stroke="none" stroke-width="1" /><circle cx="7.5" cy="7.5" r="2" fill="#fff" stroke="#000" stroke-width="0.8"/><path d="M8 4c0-2.5 1.5-3.2 3-3.2s3 1 3 2.5c0 2-2.2 2-2.2 3.8v1" fill="none" stroke="#000" stroke-width="2.6" /><path d="M8 4c0-2.5 1.5-3.2 3-3.2s3 1 3 2.5c0 2-2.2 2-2.2 3.8v1" fill="none" stroke="#ffff00" stroke-width="1.1" /><rect x="10.5" y="9.5" width="2.4" height="2.4" fill="#ffff00"/></svg>
<svg class="a" style="left:456px;top:80px" width="16" height="16" viewBox="0 0 16 16" shape-rendering="crispEdges"><circle cx="8" cy="7.5" r="7.3" fill="#000080"/><path d="M9 1l5 2 1.5 4-4 0z" fill="#ffff00" stroke="none" stroke-width="1" /><path d="M11 8l3.5 1-1 3-3-1z" fill="#40a040" stroke="none" stroke-width="1" /><path d="M2 4l2 1 1-3 3 3 2-1-1 3-3 4-4 2 2-4-3 0z" fill="#fff" stroke="none" stroke-width="1" /><path d="M10 4l1 1" fill="none" stroke="#000" stroke-width="0.8" /></svg>
<svg class="a" style="left:479px;top:80px" width="16" height="16" viewBox="0 0 16 16" shape-rendering="crispEdges"><circle cx="8" cy="7.5" r="7.3" fill="#0000e0"/><path d="M8 0.2A7.3 7.3 0 0 1 15 5h-7z" fill="#e00000" stroke="none" stroke-width="1" /><path d="M4 1l4 0 0 5-4 0z" fill="#20a060" stroke="none" stroke-width="1" /><path d="M1 9l3 5 2-4z" fill="#40ff40" stroke="none" stroke-width="1" /><ellipse cx="11" cy="7" rx="4" ry="1.6" fill="#ffff00" stroke="#000" stroke-width="0.8"/><rect x="7" y="7" width="8" height="7" fill="#ffff00"/><path d="M7 9.5h8M7 12h8M7 14.5h8" fill="none" stroke="#000" stroke-width="0.9" /><path d="M7 7v7.5M15 7v7.5" fill="none" stroke="#000" stroke-width="0.8" /></svg>
<svg class="a" style="left:502px;top:80px" width="16" height="16" viewBox="0 0 16 16" shape-rendering="crispEdges"><rect x="2" y="2" width="13" height="13" fill="#000060"/><rect x="0" y="0" width="13" height="3.5" fill="#000"/><rect x="2.0" y="1" width="1" height="1" fill="#fff"/><rect x="4.6" y="1" width="1" height="1" fill="#fff"/><rect x="7.2" y="1" width="1" height="1" fill="#fff"/><rect x="9.8" y="1" width="1" height="1" fill="#fff"/><rect x="0" y="3.5" width="12" height="10" fill="#ffff40"/><text x="0.5" y="12" font-family="Liberation Sans" font-weight="bold" font-style="italic" font-size="8.5" fill="#e00000">20</text></svg>
<div class="a" style="left:378px;top:106px;width:23px;height:22px;background:#f8f8f4;border:1px solid #c8c4b0"></div>
<svg class="a" style="left:13px;top:109px" width="16" height="16" viewBox="0 0 16 16" shape-rendering="crispEdges"><rect x="4" y="1" width="10" height="3" fill="#000080"/><rect x="6" y="2" width="1" height="1" fill="#fff"/><rect x="9" y="2" width="1" height="1" fill="#fff"/><path d="M1.5 4.5h12v4h-12z" fill="#fff" stroke="#000" stroke-width="1.2" /><rect x="3" y="6" width="1" height="1" fill="#000"/><rect x="6" y="6" width="1" height="1" fill="#000"/><rect x="9" y="6" width="1" height="1" fill="#000"/><path d="M1.5 9.5h12v4h-12z" fill="#fff" stroke="#000" stroke-width="1.2" /><rect x="3" y="11" width="1" height="1" fill="#000"/><rect x="6" y="11" width="1" height="1" fill="#000"/><rect x="9" y="11" width="1" height="1" fill="#000"/><path d="M0 1l3 2M2 0l1 3M5 0l-2 3" fill="none" stroke="#e0e000" stroke-width="1" /></svg>
<svg class="a" style="left:37px;top:109px" width="16" height="16" viewBox="0 0 16 16" shape-rendering="crispEdges"><path d="M0.5 3.5h5l1.5 1.5h6.5v9.5h-13z" fill="#ffff80" stroke="#c0c040" stroke-width="1" /><path d="M13.5 5v10h-13" fill="none" stroke="#000" stroke-width="1.5" /><rect x="3" y="7" width="8" height="5" fill="#f0f060"/><path d="M5 1l2 2" fill="none" stroke="#000" stroke-width="1.2" /></svg>
<svg class="a" style="left:60px;top:109px" width="16" height="16" viewBox="0 0 16 16" shape-rendering="crispEdges"><rect x="1" y="2" width="10" height="3" fill="#000080"/><rect x="3" y="3" width="1" height="1" fill="#fff"/><rect x="6" y="3" width="1" height="1" fill="#fff"/><path d="M1.5 5.5h9v4h-9z" fill="#fff" stroke="#000" stroke-width="1.2" /><rect x="3" y="7" width="1" height="1" fill="#000"/><rect x="6" y="7" width="1" height="1" fill="#000"/><path d="M1.5 10.5h7v4h-7z" fill="#fff" stroke="#000" stroke-width="1.2" /><rect x="3" y="12" width="1" height="1" fill="#000"/><rect x="6" y="12" width="1" height="1" fill="#000"/><path d="M14.5 0l-5 12" fill="none" stroke="#000" stroke-width="2.4" /><path d="M14 1l-4 9" fill="none" stroke="#f0f080" stroke-width="1" /><rect x="10" y="12" width="3" height="3" fill="#000"/><rect x="10.5" y="12.5" width="2" height="2" fill="#fff"/></svg>
<svg class="a" style="left:83px;top:109px" width="16" height="16" viewBox="0 0 16 16" shape-rendering="crispEdges"><circle cx="9.5" cy="4.8" r="4.2" fill="#40d0d0" stroke="#000" stroke-width="1.2"/><path d="M8.5 3c1-1 2.5 0 2 1.2s-1 1-1 2" fill="none" stroke="#006060" stroke-width="1" /><path d="M0.8 15.2l5-5" fill="none" stroke="#000080" stroke-width="2.4" /><path d="M1.5 14l3.5-3.5" fill="none" stroke="#8080ff" stroke-width="0.8" /><path d="M6.5 9.5h8v5.5h-8z" fill="#fff" stroke="#000" stroke-width="1.2" /><rect x="8" y="12" width="1" height="1" fill="#800000"/><rect x="10" y="12" width="1" height="1" fill="#800000"/><rect x="12" y="12" width="1" height="1" fill="#800000"/></svg>
<svg class="a" style="left:105px;top:109px" width="16" height="16" viewBox="0 0 16 16" shape-rendering="crispEdges"><rect x="0" y="0" width="12" height="3" fill="#000080"/><rect x="2" y="1" width="1" height="1" fill="#fff"/><rect x="5" y="1" width="1" height="1" fill="#fff"/><rect x="8" y="1" width="1" height="1" fill="#fff"/><path d="M0.5 3.5h11v4h-11z" fill="#fff" stroke="#000" stroke-width="1.2" /><rect x="2" y="5" width="1" height="1" fill="#000"/><rect x="5" y="5" width="1" height="1" fill="#000"/><rect x="8" y="5" width="1" height="1" fill="#000"/><path d="M0.5 8.5h11v4h-11z" fill="#fff" stroke="#000" stroke-width="1.2" /><rect x="2" y="10" width="1" height="1" fill="#000"/><rect x="5" y="10" width="1" height="1" fill="#000"/><rect x="8" y="10" width="1" height="1" fill="#000"/><path d="M13.5 11v5M11 13.5h5" fill="none" stroke="#000" stroke-width="1.5" /></svg>
<svg class="a" style="left:128px;top:109px" width="16" height="16" viewBox="0 0 16 16" shape-rendering="crispEdges"><rect x="0" y="1" width="13" height="3" fill="#000080"/><rect x="2" y="2" width="1" height="1" fill="#fff"/><rect x="5" y="2" width="1" height="1" fill="#fff"/><rect x="8" y="2" width="1" height="1" fill="#fff"/><path d="M0.5 4.5h12v4h-12z" fill="#fff" stroke="#000" stroke-width="1.2" /><rect x="2" y="6" width="1" height="1" fill="#000"/><rect x="5" y="6" width="1" height="1" fill="#000"/><rect x="8" y="6" width="1" height="1" fill="#000"/><path d="M0.5 9.5h12v4h-12z" fill="#fff" stroke="#000" stroke-width="1.2" /><rect x="2" y="11" width="1" height="1" fill="#000"/><rect x="5" y="11" width="1" height="1" fill="#000"/><rect x="8" y="11" width="1" height="1" fill="#000"/><path d="M8 8l7 8M15 8l-7 8" fill="none" stroke="#d00000" stroke-width="1.8" /></svg>
<svg class="a" style="left:151px;top:109px" width="16" height="16" viewBox="0 0 16 16" shape-rendering="crispEdges"><path d="M1.5 1.5h11v4h-11z M0.5 5.5h12v5h-12z M0.5 10.5h7v4h-7z" fill="#f0f0f0" stroke="#a8a8a8" stroke-width="1" /><rect x="7" y="9" width="8" height="7" fill="#a8a8a8"/><rect x="8" y="10" width="5" height="3" fill="#e8e8e8"/></svg>
<svg class="a" style="left:174px;top:109px" width="16" height="16" viewBox="0 0 16 16" shape-rendering="crispEdges"><path d="M0 1h5v-1l3 2.5-3 2.5v-1h-5z" fill="#ffff00" stroke="#000" stroke-width="0.8" /><path d="M0 6h5v-1.5l3 3-3 3v-1.5h-5z" fill="#0000e0" stroke="#000" stroke-width="0.5" /><path d="M0 11h5v-1.5l3 3-3 3v-1.5h-5z" fill="#e00000" stroke="#000" stroke-width="0.5" /><path d="M9 1v14" fill="none" stroke="#c0c0c0" stroke-width="1" /><path d="M9 6h4v-2l3 3.5-3 3.5v-2h-4z" fill="#0000e0" stroke="none" stroke-width="1" /></svg>
<svg class="a" style="left:197px;top:109px" width="16" height="16" viewBox="0 0 16 16" shape-rendering="crispEdges"><path d="M0 1h5v-1l3 2.5-3 2.5v-1h-5z" fill="#ffff00" stroke="#000" stroke-width="0.8" /><path d="M0 6h5v-1.5l3 3-3 3v-1.5h-5z" fill="#0000e0" stroke="#000" stroke-width="0.5" /><path d="M0 11h5v-1.5l3 3-3 3v-1.5h-5z" fill="#e00000" stroke="#000" stroke-width="0.5" /><path d="M9 1v14" fill="none" stroke="#c0c0c0" stroke-width="1" /><path d="M9.5 14.5l0-8 3-4 3 4v8z" fill="#ffff80" stroke="#000" stroke-width="0.9" /><rect x="11" y="8" width="2" height="1" fill="#000"/><rect x="11" y="10" width="3" height="1" fill="#000"/><rect x="11" y="12" width="3" height="1" fill="#000"/></svg>
<svg class="a" style="left:221px;top:109px" width="16" height="16" viewBox="0 0 16 16" shape-rendering="crispEdges"><rect x="1" y="1" width="12" height="3" fill="#a8a8a8"/><rect x="11" y="1" width="1.5" height="14" fill="#a8a8a8"/><rect x="12.5" y="6" width="1.5" height="1" fill="#a8a8a8"/><rect x="14.5" y="6" width="1.5" height="1" fill="#a8a8a8"/><rect x="16.5" y="6" width="1.5" height="1" fill="#a8a8a8"/><rect x="18.5" y="6" width="1.5" height="1" fill="#a8a8a8"/><rect x="20.5" y="6" width="1.5" height="1" fill="#a8a8a8"/><path d="M2 8h5v-2.5l3.5 3.5-3.5 3.5v-2.5h-5z" fill="#a8a8a8" stroke="none" stroke-width="1" /></svg>
<svg class="a" style="left:244px;top:109px" width="16" height="16" viewBox="0 0 16 16" shape-rendering="crispEdges"><path d="M5.5 1.5h9v8h-9z M3.5 3.5h9v8h-9z M0.5 6.5h9v8h-9z" fill="#f0f0f0" stroke="#a8a8a8" stroke-width="1" /><path d="M2 10h4v-2l3 2.5-3 2.5v-2h-4z" fill="#a8a8a8" stroke="none" stroke-width="1" /></svg>
<svg class="a" style="left:267px;top:109px" width="16" height="16" viewBox="0 0 16 16" shape-rendering="crispEdges"><path d="M0 1h5v-1l3 2.5-3 2.5v-1h-5z M0 6h5v-1.5l3 3-3 3v-1.5h-5z M0 11h5v-1.5l3 3-3 3v-1.5h-5z" fill="#a8a8a8" stroke="none" stroke-width="1" /><path d="M9 7h3v-2l3 3-3 3v-2h-3z" fill="#a8a8a8" stroke="none" stroke-width="1" /></svg>
<svg class="a" style="left:290px;top:109px" width="16" height="16" viewBox="0 0 16 16" shape-rendering="crispEdges"><path d="M1 1l6 7M3 0l3 12M7 3l4 5M8 9l3 3 3-3-3-3z" fill="none" stroke="#b0b0b0" stroke-width="1.2" /><rect x="10" y="10" width="1" height="1" fill="#b0b0b0"/><rect x="12" y="10" width="1" height="1" fill="#b0b0b0"/><rect x="14" y="10" width="1" height="1" fill="#b0b0b0"/></svg>
<svg class="a" style="left:312px;top:109px" width="16" height="16" viewBox="0 0 16 16" shape-rendering="crispEdges"><path d="M0.5 0.5h5l2 2v8h-7z" fill="#f0f0f0" stroke="#a8a8a8" stroke-width="1" /><path d="M4.5 3.5h5l2 2v9h-7z" fill="#f0f0f0" stroke="#a8a8a8" stroke-width="1" /><path d="M8 6h5l2 2v7h-7z" fill="#a8a8a8" stroke="none" stroke-width="1" /></svg>
<svg class="a" style="left:337px;top:109px" width="16" height="16" viewBox="0 0 16 16" shape-rendering="crispEdges"><path d="M0.5 13.5v-13h8l3 3" fill="none" stroke="#808040" stroke-width="1" /><rect x="1" y="1" width="8" height="13" fill="#fff"/><path d="M11.5 3.5v10.5h-11" fill="none" stroke="#000" stroke-width="1.6" /><rect x="9" y="1" width="2" height="3" fill="#f0f0f0"/><path d="M3.5 2v8.5h5M3.5 6h5M6 5.5h2.5v2h-2.5z" fill="none" stroke="#000" stroke-width="1.3" /></svg>
<svg class="a" style="left:358px;top:109px" width="16" height="16" viewBox="0 0 16 16" shape-rendering="crispEdges"><path d="M0.5 13.5v-13h8l3 3" fill="none" stroke="#808040" stroke-width="1" /><rect x="1" y="1" width="8" height="13" fill="#fff"/><path d="M3.5 2v8.5M3.5 5h3" fill="none" stroke="#000" stroke-width="1.2" /><path d="M6.5 5.5h5l3.5 3.5v5.5h-8.5z" fill="#fff" stroke="#000080" stroke-width="1.2" /><rect x="12" y="11" width="1" height="1" fill="#000080"/><rect x="12" y="13" width="1" height="1" fill="#000080"/><path d="M3 9.5l3-2.5v1.5h5v2h-5v1.5z" fill="#000080" stroke="none" stroke-width="1" /><rect x="0" y="13" width="12" height="1.5" fill="#000"/></svg>
<svg class="a" style="left:381px;top:109px" width="16" height="16" viewBox="0 0 16 16" shape-rendering="crispEdges"><path d="M2.5 2v11M2.5 4.5h2M2.5 8.5h2M2.5 12.5h2M9.5 9v6M9.5 11h2M9.5 14.5h2" fill="none" stroke="#000" stroke-width="1.1" /><ellipse cx="7.5" cy="2.8" rx="3.2" ry="2" fill="#e8e850"/><rect x="4" y="5" width="6" height="2" fill="#e8e860"/><rect x="4" y="8" width="6" height="1.6" fill="#40c8c0"/><rect x="4" y="12" width="6" height="1.6" fill="#40c8c0"/><ellipse cx="13" cy="8.5" rx="3" ry="1.8" fill="#e8e850"/><rect x="11" y="10.5" width="5" height="1.6" fill="#40c8c0"/><rect x="11" y="14" width="5" height="1.6" fill="#40c8c0"/></svg>
<svg class="a" style="left:406px;top:109px" width="16" height="16" viewBox="0 0 16 16" shape-rendering="crispEdges"><path d="M0.5 0.5h9l3 3v11h-12z" fill="#fff" stroke="#808040" stroke-width="1" /><path d="M12.5 3.5v11.5h-12" fill="none" stroke="#000" stroke-width="1.6" /><path d="M3.5 5c0-2 1-3 3-3s3 1 3 2.5c0 1.5-2 2-2 3.5v1" fill="none" stroke="#000080" stroke-width="2.2" /><rect x="5.5" y="11" width="2.4" height="2.4" fill="#000080"/></svg>
<svg class="a" style="left:428px;top:109px" width="16" height="16" viewBox="0 0 16 16" shape-rendering="crispEdges"><path d="M1 1v11l3-3 2 5 2-1-2-5h4z" fill="#fff" stroke="#000" stroke-width="1.3" /><path d="M9 3.5c0-2 1-3 3-3s3 1 3 2.5c0 1.5-2 2-2 3.5" fill="none" stroke="#000080" stroke-width="2" /><rect x="11.5" y="8" width="2.4" height="2.2" fill="#000080"/></svg>
<div class="a t" style="left:30px;top:23.8px;">Файл</div>
<div class="a t" style="left:68px;top:23.8px;">Действия</div>
<div class="a t" style="left:128px;top:23.8px;">Операции</div>
<div class="a t" style="left:190px;top:23.8px;">Справочники</div>
<div class="a t" style="left:270px;top:23.8px;">Документы</div>
<div class="a t" style="left:340px;top:23.8px;">Журналы</div>
<div class="a t" style="left:399px;top:23.8px;">Отчеты</div>
<div class="a t" style="left:451px;top:23.8px;">Налоговый учет</div>
<div class="a t" style="left:547px;top:23.8px;">Сервис</div>
<div class="a t" style="left:594px;top:23.8px;">Окна</div>
<div class="a t" style="left:632px;top:23.8px;">Помощь</div>
<div class="a" style="left:30px;top:36px;width:8px;height:1px;background:#000;"></div>
<div class="a" style="left:68px;top:36px;width:8px;height:1px;background:#000;"></div>
<div class="a" style="left:149px;top:36px;width:6px;height:1px;background:#000;"></div>
<div class="a" style="left:547px;top:36px;width:8px;height:1px;background:#000;"></div>
<div class="a" style="left:594px;top:36px;width:9px;height:1px;background:#000;"></div>
<div class="a" style="left:632px;top:36px;width:8px;height:1px;background:#000;"></div>
<div class="a" style="left:12px;top:139px;width:137px;height:442px;background:#fff;border-top:2px solid #8c8c8c;border-left:2px solid #8c8c8c"></div>
<div class="a" style="left:52px;top:142px;width:60px;height:14px;background:#ebeae4;"></div>
<div class="a t" style="left:54px;top:142px;">Животные</div>
<div class="a" style="left:152px;top:138px;width:870px;height:446px;background:#000;"></div>
<div class="a" style="left:153px;top:139px;width:868px;height:444px;background:#fff;"></div>
<div class="a" style="left:153px;top:139px;width:868px;height:1px;background:#9d9d9d;"></div>
<div class="a" style="left:153px;top:139px;width:1px;height:444px;background:#9d9d9d;"></div>
<div class="a" style="left:154px;top:140px;width:1px;height:443px;background:#d8d8d8;"></div>
<div class="a" style="left:155px;top:140px;width:850px;height:14px;background:#ebeae4;"></div>
<div class="a" style="left:153px;top:139px;width:866px;height:1px;background:#a8a8a4;"></div>
<div class="a" style="left:155px;top:140px;width:850px;height:1px;background:#f8f8f6;"></div>
<div class="a" style="left:155px;top:154px;width:850px;height:1px;background:#000;"></div>
<div class="a" style="left:155px;top:155px;width:850px;height:1px;background:#d0d0d0;"></div>
<div class="a" style="left:155px;top:157px;width:25px;height:426px;background:#eeebe6;"></div>
<div class="a" style="left:155px;top:156px;width:850px;height:1px;background:#000;"></div>
<div class="a" style="left:155px;top:171px;width:850px;height:1px;background:#000;"></div>
<div class="a" style="left:155px;top:186px;width:850px;height:1px;background:#000;"></div>
<div class="a" style="left:155px;top:201px;width:850px;height:1px;background:#000;"></div>
<div class="a" style="left:155px;top:216px;width:850px;height:1px;background:#000;"></div>
<div class="a" style="left:155px;top:231px;width:850px;height:1px;background:#000;"></div>
<div class="a" style="left:155px;top:246px;width:850px;height:1px;background:#000;"></div>
<div class="a" style="left:155px;top:261px;width:850px;height:1px;background:#000;"></div>
<div class="a" style="left:155px;top:276px;width:850px;height:1px;background:#000;"></div>
<div class="a" style="left:155px;top:291px;width:850px;height:1px;background:#000;"></div>
<div class="a" style="left:155px;top:306px;width:850px;height:1px;background:#000;"></div>
<div class="a" style="left:155px;top:321px;width:850px;height:1px;background:#000;"></div>
<div class="a" style="left:155px;top:336px;width:850px;height:1px;background:#000;"></div>
<div class="a" style="left:155px;top:351px;width:850px;height:1px;background:#000;"></div>
<div class="a" style="left:155px;top:366px;width:850px;height:1px;background:#000;"></div>
<div class="a" style="left:155px;top:381px;width:850px;height:1px;background:#000;"></div>
<div class="a" style="left:155px;top:396px;width:850px;height:1px;background:#000;"></div>
<div class="a" style="left:155px;top:411px;width:850px;height:1px;background:#000;"></div>
<div class="a" style="left:155px;top:426px;width:850px;height:1px;background:#000;"></div>
<div class="a" style="left:155px;top:441px;width:850px;height:1px;background:#000;"></div>
<div class="a" style="left:155px;top:456px;width:850px;height:1px;background:#000;"></div>
<div class="a" style="left:155px;top:471px;width:850px;height:1px;background:#000;"></div>
<div class="a" style="left:155px;top:486px;width:850px;height:1px;background:#000;"></div>
<div class="a" style="left:155px;top:501px;width:850px;height:1px;background:#000;"></div>
<div class="a" style="left:155px;top:516px;width:850px;height:1px;background:#000;"></div>
<div class="a" style="left:155px;top:531px;width:850px;height:1px;background:#000;"></div>
<div class="a" style="left:155px;top:546px;width:850px;height:1px;background:#000;"></div>
<div class="a" style="left:155px;top:561px;width:850px;height:1px;background:#000;"></div>
<div class="a" style="left:155px;top:576px;width:850px;height:1px;background:#000;"></div>
<div class="a" style="left:180px;top:140px;width:1px;height:443px;background:#000;"></div>
<div class="a" style="left:182px;top:140px;width:1px;height:443px;background:#000;"></div>
<div class="a" style="left:423px;top:140px;width:1px;height:443px;background:#000;"></div>
<div class="a" style="left:425px;top:140px;width:1px;height:443px;background:#000;"></div>
<div class="a t" style="left:186px;top:140px;font-weight:bold">Код</div>
<div class="a t" style="left:429px;top:140px;font-weight:bold;letter-spacing:0.5px">Наименование</div>
<div class="a t" style="left:429px;top:156px;">Баранчики&nbsp;2005г.</div>
<div class="a t" style="left:186px;top:156px;">000000019</div>
<svg class="a" style="left:158px;top:157px" width="15" height="13" viewBox="0 0 15 13" shape-rendering="crispEdges"><path d="M1 3V2h5l1 1" fill="#90e0e8" stroke="#7aa0a0"/><path d="M5 1h1l1 1v1h1" fill="none" stroke="#000" stroke-width="1"/><rect x="0.5" y="3" width="12.5" height="8.5" fill="#58d4dc" stroke="#80a8ac"/><path d="M1 4h11.5M1 3.5v7.5" stroke="#b8f4f8"/><path d="M2 6h10M3 8h8" stroke="#70e0e8"/><rect x="13" y="3" width="1.5" height="10" fill="#000"/><rect x="1" y="11.5" width="13.5" height="1.5" fill="#000"/></svg>
<div class="a t" style="left:429px;top:171px;">Бык&nbsp;"Обрак"</div>
<div class="a t" style="left:186px;top:171px;">Ц00000001</div>
<svg class="a" style="left:158px;top:172px" width="15" height="13" viewBox="0 0 15 13" shape-rendering="crispEdges"><path d="M1 3V2h5l1 1" fill="#90e0e8" stroke="#7aa0a0"/><path d="M5 1h1l1 1v1h1" fill="none" stroke="#000" stroke-width="1"/><rect x="0.5" y="3" width="12.5" height="8.5" fill="#58d4dc" stroke="#80a8ac"/><path d="M1 4h11.5M1 3.5v7.5" stroke="#b8f4f8"/><path d="M2 6h10M3 8h8" stroke="#70e0e8"/><rect x="13" y="3" width="1.5" height="10" fill="#000"/><rect x="1" y="11.5" width="13.5" height="1.5" fill="#000"/></svg>
<div class="a t" style="left:429px;top:186px;">Быки&nbsp;&nbsp;12&nbsp;-&nbsp;24&nbsp;мес.</div>
<div class="a t" style="left:186px;top:186px;">Ц00000011</div>
<svg class="a" style="left:158px;top:187px" width="15" height="13" viewBox="0 0 15 13" shape-rendering="crispEdges"><path d="M1 3V2h5l1 1" fill="#90e0e8" stroke="#7aa0a0"/><path d="M5 1h1l1 1v1h1" fill="none" stroke="#000" stroke-width="1"/><rect x="0.5" y="3" width="12.5" height="8.5" fill="#58d4dc" stroke="#80a8ac"/><path d="M1 4h11.5M1 3.5v7.5" stroke="#b8f4f8"/><path d="M2 6h10M3 8h8" stroke="#70e0e8"/><rect x="13" y="3" width="1.5" height="10" fill="#000"/><rect x="1" y="11.5" width="13.5" height="1.5" fill="#000"/></svg>
<div class="a t" style="left:429px;top:201px;">Быки&nbsp;0&nbsp;-&nbsp;2&nbsp;мес.</div>
<div class="a t" style="left:186px;top:201px;">Ц00000022</div>
<svg class="a" style="left:158px;top:202px" width="15" height="13" viewBox="0 0 15 13" shape-rendering="crispEdges"><path d="M1 3V2h5l1 1" fill="#90e0e8" stroke="#7aa0a0"/><path d="M5 1h1l1 1v1h1" fill="none" stroke="#000" stroke-width="1"/><rect x="0.5" y="3" width="12.5" height="8.5" fill="#58d4dc" stroke="#80a8ac"/><path d="M1 4h11.5M1 3.5v7.5" stroke="#b8f4f8"/><path d="M2 6h10M3 8h8" stroke="#70e0e8"/><rect x="13" y="3" width="1.5" height="10" fill="#000"/><rect x="1" y="11.5" width="13.5" height="1.5" fill="#000"/></svg>
<div class="a t" style="left:429px;top:216px;">Быки&nbsp;2&nbsp;-&nbsp;6&nbsp;мес.</div>
<div class="a t" style="left:186px;top:216px;">Ц00000024</div>
<svg class="a" style="left:158px;top:217px" width="15" height="13" viewBox="0 0 15 13" shape-rendering="crispEdges"><path d="M1 3V2h5l1 1" fill="#90e0e8" stroke="#7aa0a0"/><path d="M5 1h1l1 1v1h1" fill="none" stroke="#000" stroke-width="1"/><rect x="0.5" y="3" width="12.5" height="8.5" fill="#58d4dc" stroke="#80a8ac"/><path d="M1 4h11.5M1 3.5v7.5" stroke="#b8f4f8"/><path d="M2 6h10M3 8h8" stroke="#70e0e8"/><rect x="13" y="3" width="1.5" height="10" fill="#000"/><rect x="1" y="11.5" width="13.5" height="1.5" fill="#000"/></svg>
<div class="a t" style="left:429px;top:231px;">Быки&nbsp;6-12&nbsp;мес.</div>
<div class="a t" style="left:186px;top:231px;">Ц00000027</div>
<svg class="a" style="left:158px;top:232px" width="15" height="13" viewBox="0 0 15 13" shape-rendering="crispEdges"><path d="M1 3V2h5l1 1" fill="#90e0e8" stroke="#7aa0a0"/><path d="M5 1h1l1 1v1h1" fill="none" stroke="#000" stroke-width="1"/><rect x="0.5" y="3" width="12.5" height="8.5" fill="#58d4dc" stroke="#80a8ac"/><path d="M1 4h11.5M1 3.5v7.5" stroke="#b8f4f8"/><path d="M2 6h10M3 8h8" stroke="#70e0e8"/><rect x="13" y="3" width="1.5" height="10" fill="#000"/><rect x="1" y="11.5" width="13.5" height="1.5" fill="#000"/></svg>
<div class="a t" style="left:429px;top:246px;">Быки&nbsp;на&nbsp;откорме</div>
<div class="a t" style="left:186px;top:246px;">000000031</div>
<svg class="a" style="left:158px;top:247px" width="15" height="13" viewBox="0 0 15 13" shape-rendering="crispEdges"><path d="M1 3V2h5l1 1" fill="#90e0e8" stroke="#7aa0a0"/><path d="M5 1h1l1 1v1h1" fill="none" stroke="#000" stroke-width="1"/><rect x="0.5" y="3" width="12.5" height="8.5" fill="#58d4dc" stroke="#80a8ac"/><path d="M1 4h11.5M1 3.5v7.5" stroke="#b8f4f8"/><path d="M2 6h10M3 8h8" stroke="#70e0e8"/><rect x="13" y="3" width="1.5" height="10" fill="#000"/><rect x="1" y="11.5" width="13.5" height="1.5" fill="#000"/></svg>
<div class="a" style="left:426px;top:262px;width:579px;height:14px;background:#5d6f9c;outline:1px dotted #000;outline-offset:-1px"></div>
<div class="a t" style="left:429px;top:261px;color:#fff">Бычки&nbsp;&nbsp;2008&nbsp;г.</div>
<div class="a t" style="left:186px;top:261px;">Ц00000006</div>
<svg class="a" style="left:158px;top:262px" width="15" height="13" viewBox="0 0 15 13" shape-rendering="crispEdges"><path d="M1 3V2h5l1 1" fill="#90e0e8" stroke="#7aa0a0"/><path d="M5 1h1l1 1v1h1" fill="none" stroke="#000" stroke-width="1"/><rect x="0.5" y="3" width="12.5" height="8.5" fill="#58d4dc" stroke="#80a8ac"/><path d="M1 4h11.5M1 3.5v7.5" stroke="#b8f4f8"/><path d="M2 6h10M3 8h8" stroke="#70e0e8"/><rect x="13" y="3" width="1.5" height="10" fill="#000"/><rect x="1" y="11.5" width="13.5" height="1.5" fill="#000"/></svg>
<div class="a t" style="left:429px;top:276px;">Бычки&nbsp;2004&nbsp;г.</div>
<div class="a t" style="left:186px;top:276px;">000000004</div>
<svg class="a" style="left:158px;top:277px" width="15" height="13" viewBox="0 0 15 13" shape-rendering="crispEdges"><path d="M1 3V2h5l1 1" fill="#90e0e8" stroke="#7aa0a0"/><path d="M5 1h1l1 1v1h1" fill="none" stroke="#000" stroke-width="1"/><rect x="0.5" y="3" width="12.5" height="8.5" fill="#58d4dc" stroke="#80a8ac"/><path d="M1 4h11.5M1 3.5v7.5" stroke="#b8f4f8"/><path d="M2 6h10M3 8h8" stroke="#70e0e8"/><rect x="13" y="3" width="1.5" height="10" fill="#000"/><rect x="1" y="11.5" width="13.5" height="1.5" fill="#000"/></svg>
<div class="a t" style="left:429px;top:291px;">Бычки&nbsp;2005&nbsp;г.</div>
<div class="a t" style="left:186px;top:291px;">000000011</div>
<svg class="a" style="left:158px;top:292px" width="15" height="13" viewBox="0 0 15 13" shape-rendering="crispEdges"><path d="M1 3V2h5l1 1" fill="#90e0e8" stroke="#7aa0a0"/><path d="M5 1h1l1 1v1h1" fill="none" stroke="#000" stroke-width="1"/><rect x="0.5" y="3" width="12.5" height="8.5" fill="#58d4dc" stroke="#80a8ac"/><path d="M1 4h11.5M1 3.5v7.5" stroke="#b8f4f8"/><path d="M2 6h10M3 8h8" stroke="#70e0e8"/><rect x="13" y="3" width="1.5" height="10" fill="#000"/><rect x="1" y="11.5" width="13.5" height="1.5" fill="#000"/></svg>
<div class="a t" style="left:429px;top:306px;">Бычки&nbsp;2006&nbsp;г.</div>
<div class="a t" style="left:186px;top:306px;">000000007</div>
<svg class="a" style="left:158px;top:307px" width="15" height="13" viewBox="0 0 15 13" shape-rendering="crispEdges"><path d="M1 3V2h5l1 1" fill="#90e0e8" stroke="#7aa0a0"/><path d="M5 1h1l1 1v1h1" fill="none" stroke="#000" stroke-width="1"/><rect x="0.5" y="3" width="12.5" height="8.5" fill="#58d4dc" stroke="#80a8ac"/><path d="M1 4h11.5M1 3.5v7.5" stroke="#b8f4f8"/><path d="M2 6h10M3 8h8" stroke="#70e0e8"/><rect x="13" y="3" width="1.5" height="10" fill="#000"/><rect x="1" y="11.5" width="13.5" height="1.5" fill="#000"/></svg>
<div class="a t" style="left:429px;top:321px;">Бычки&nbsp;2007&nbsp;года</div>
<div class="a t" style="left:186px;top:321px;">000000027</div>
<svg class="a" style="left:158px;top:322px" width="15" height="13" viewBox="0 0 15 13" shape-rendering="crispEdges"><path d="M1 3V2h5l1 1" fill="#90e0e8" stroke="#7aa0a0"/><path d="M5 1h1l1 1v1h1" fill="none" stroke="#000" stroke-width="1"/><rect x="0.5" y="3" width="12.5" height="8.5" fill="#58d4dc" stroke="#80a8ac"/><path d="M1 4h11.5M1 3.5v7.5" stroke="#b8f4f8"/><path d="M2 6h10M3 8h8" stroke="#70e0e8"/><rect x="13" y="3" width="1.5" height="10" fill="#000"/><rect x="1" y="11.5" width="13.5" height="1.5" fill="#000"/></svg>
<div class="a t" style="left:429px;top:336px;">Бычки&nbsp;2008&nbsp;года</div>
<div class="a t" style="left:186px;top:336px;">Ц00000007</div>
<svg class="a" style="left:158px;top:337px" width="15" height="13" viewBox="0 0 15 13" shape-rendering="crispEdges"><path d="M1 3V2h5l1 1" fill="#90e0e8" stroke="#7aa0a0"/><path d="M5 1h1l1 1v1h1" fill="none" stroke="#000" stroke-width="1"/><rect x="0.5" y="3" width="12.5" height="8.5" fill="#58d4dc" stroke="#80a8ac"/><path d="M1 4h11.5M1 3.5v7.5" stroke="#b8f4f8"/><path d="M2 6h10M3 8h8" stroke="#70e0e8"/><rect x="13" y="3" width="1.5" height="10" fill="#000"/><rect x="1" y="11.5" width="13.5" height="1.5" fill="#000"/></svg>
<div class="a t" style="left:429px;top:351px;">Выбракованные&nbsp;&nbsp;телки&nbsp;&nbsp;2003&nbsp;г.</div>
<div class="a t" style="left:186px;top:351px;">000000023</div>
<svg class="a" style="left:158px;top:352px" width="15" height="13" viewBox="0 0 15 13" shape-rendering="crispEdges"><path d="M1 3V2h5l1 1" fill="#90e0e8" stroke="#7aa0a0"/><path d="M5 1h1l1 1v1h1" fill="none" stroke="#000" stroke-width="1"/><rect x="0.5" y="3" width="12.5" height="8.5" fill="#58d4dc" stroke="#80a8ac"/><path d="M1 4h11.5M1 3.5v7.5" stroke="#b8f4f8"/><path d="M2 6h10M3 8h8" stroke="#70e0e8"/><rect x="13" y="3" width="1.5" height="10" fill="#000"/><rect x="1" y="11.5" width="13.5" height="1.5" fill="#000"/></svg>
<div class="a t" style="left:429px;top:366px;">Выбракованные&nbsp;быки&nbsp;&nbsp;0&nbsp;-&nbsp;2&nbsp;мес</div>
<div class="a t" style="left:186px;top:366px;">Ц00000016</div>
<svg class="a" style="left:158px;top:367px" width="15" height="13" viewBox="0 0 15 13" shape-rendering="crispEdges"><path d="M1 3V2h5l1 1" fill="#90e0e8" stroke="#7aa0a0"/><path d="M5 1h1l1 1v1h1" fill="none" stroke="#000" stroke-width="1"/><rect x="0.5" y="3" width="12.5" height="8.5" fill="#58d4dc" stroke="#80a8ac"/><path d="M1 4h11.5M1 3.5v7.5" stroke="#b8f4f8"/><path d="M2 6h10M3 8h8" stroke="#70e0e8"/><rect x="13" y="3" width="1.5" height="10" fill="#000"/><rect x="1" y="11.5" width="13.5" height="1.5" fill="#000"/></svg>
<div class="a t" style="left:429px;top:381px;">Выбракованные&nbsp;быки&nbsp;6&nbsp;-&nbsp;12&nbsp;мес.</div>
<div class="a t" style="left:186px;top:381px;">Ц00000019</div>
<svg class="a" style="left:158px;top:382px" width="15" height="13" viewBox="0 0 15 13" shape-rendering="crispEdges"><path d="M1 3V2h5l1 1" fill="#90e0e8" stroke="#7aa0a0"/><path d="M5 1h1l1 1v1h1" fill="none" stroke="#000" stroke-width="1"/><rect x="0.5" y="3" width="12.5" height="8.5" fill="#58d4dc" stroke="#80a8ac"/><path d="M1 4h11.5M1 3.5v7.5" stroke="#b8f4f8"/><path d="M2 6h10M3 8h8" stroke="#70e0e8"/><rect x="13" y="3" width="1.5" height="10" fill="#000"/><rect x="1" y="11.5" width="13.5" height="1.5" fill="#000"/></svg>
<div class="a t" style="left:429px;top:396px;">Выбракованные&nbsp;быки&nbsp;производители</div>
<div class="a t" style="left:186px;top:396px;">Ц00000018</div>
<svg class="a" style="left:158px;top:397px" width="15" height="13" viewBox="0 0 15 13" shape-rendering="crispEdges"><path d="M1 3V2h5l1 1" fill="#90e0e8" stroke="#7aa0a0"/><path d="M5 1h1l1 1v1h1" fill="none" stroke="#000" stroke-width="1"/><rect x="0.5" y="3" width="12.5" height="8.5" fill="#58d4dc" stroke="#80a8ac"/><path d="M1 4h11.5M1 3.5v7.5" stroke="#b8f4f8"/><path d="M2 6h10M3 8h8" stroke="#70e0e8"/><rect x="13" y="3" width="1.5" height="10" fill="#000"/><rect x="1" y="11.5" width="13.5" height="1.5" fill="#000"/></svg>
<div class="a t" style="left:429px;top:411px;">Выбракованные&nbsp;бычки&nbsp;&nbsp;12&nbsp;-&nbsp;24&nbsp;мес.</div>
<div class="a t" style="left:186px;top:411px;">Ц00000020</div>
<svg class="a" style="left:158px;top:412px" width="15" height="13" viewBox="0 0 15 13" shape-rendering="crispEdges"><path d="M1 3V2h5l1 1" fill="#90e0e8" stroke="#7aa0a0"/><path d="M5 1h1l1 1v1h1" fill="none" stroke="#000" stroke-width="1"/><rect x="0.5" y="3" width="12.5" height="8.5" fill="#58d4dc" stroke="#80a8ac"/><path d="M1 4h11.5M1 3.5v7.5" stroke="#b8f4f8"/><path d="M2 6h10M3 8h8" stroke="#70e0e8"/><rect x="13" y="3" width="1.5" height="10" fill="#000"/><rect x="1" y="11.5" width="13.5" height="1.5" fill="#000"/></svg>
<div class="a t" style="left:429px;top:426px;">Выбракованные&nbsp;бычки&nbsp;&nbsp;2&nbsp;-&nbsp;6&nbsp;мес.</div>
<div class="a t" style="left:186px;top:426px;">Ц00000026</div>
<svg class="a" style="left:158px;top:427px" width="15" height="13" viewBox="0 0 15 13" shape-rendering="crispEdges"><path d="M1 3V2h5l1 1" fill="#90e0e8" stroke="#7aa0a0"/><path d="M5 1h1l1 1v1h1" fill="none" stroke="#000" stroke-width="1"/><rect x="0.5" y="3" width="12.5" height="8.5" fill="#58d4dc" stroke="#80a8ac"/><path d="M1 4h11.5M1 3.5v7.5" stroke="#b8f4f8"/><path d="M2 6h10M3 8h8" stroke="#70e0e8"/><rect x="13" y="3" width="1.5" height="10" fill="#000"/><rect x="1" y="11.5" width="13.5" height="1.5" fill="#000"/></svg>
<div class="a t" style="left:429px;top:441px;">Выбракованные&nbsp;бычки&nbsp;2006&nbsp;г.</div>
<div class="a t" style="left:186px;top:441px;">000000010</div>
<svg class="a" style="left:158px;top:442px" width="15" height="13" viewBox="0 0 15 13" shape-rendering="crispEdges"><path d="M1 3V2h5l1 1" fill="#90e0e8" stroke="#7aa0a0"/><path d="M5 1h1l1 1v1h1" fill="none" stroke="#000" stroke-width="1"/><rect x="0.5" y="3" width="12.5" height="8.5" fill="#58d4dc" stroke="#80a8ac"/><path d="M1 4h11.5M1 3.5v7.5" stroke="#b8f4f8"/><path d="M2 6h10M3 8h8" stroke="#70e0e8"/><rect x="13" y="3" width="1.5" height="10" fill="#000"/><rect x="1" y="11.5" width="13.5" height="1.5" fill="#000"/></svg>
<div class="a t" style="left:429px;top:456px;">Выбракованные&nbsp;бычки&nbsp;2007&nbsp;г.</div>
<div class="a t" style="left:186px;top:456px;">000000029</div>
<svg class="a" style="left:158px;top:457px" width="15" height="13" viewBox="0 0 15 13" shape-rendering="crispEdges"><path d="M1 3V2h5l1 1" fill="#90e0e8" stroke="#7aa0a0"/><path d="M5 1h1l1 1v1h1" fill="none" stroke="#000" stroke-width="1"/><rect x="0.5" y="3" width="12.5" height="8.5" fill="#58d4dc" stroke="#80a8ac"/><path d="M1 4h11.5M1 3.5v7.5" stroke="#b8f4f8"/><path d="M2 6h10M3 8h8" stroke="#70e0e8"/><rect x="13" y="3" width="1.5" height="10" fill="#000"/><rect x="1" y="11.5" width="13.5" height="1.5" fill="#000"/></svg>
<div class="a t" style="left:429px;top:471px;">Выбракованные&nbsp;свиньи</div>
<div class="a t" style="left:186px;top:471px;">000000026</div>
<svg class="a" style="left:158px;top:472px" width="15" height="13" viewBox="0 0 15 13" shape-rendering="crispEdges"><path d="M1 3V2h5l1 1" fill="#90e0e8" stroke="#7aa0a0"/><path d="M5 1h1l1 1v1h1" fill="none" stroke="#000" stroke-width="1"/><rect x="0.5" y="3" width="12.5" height="8.5" fill="#58d4dc" stroke="#80a8ac"/><path d="M1 4h11.5M1 3.5v7.5" stroke="#b8f4f8"/><path d="M2 6h10M3 8h8" stroke="#70e0e8"/><rect x="13" y="3" width="1.5" height="10" fill="#000"/><rect x="1" y="11.5" width="13.5" height="1.5" fill="#000"/><path d="M0.5 2.5L9 12M0.5 12L9 2.5" stroke="#10108a" stroke-width="1.4"/></svg>
<div class="a t" style="left:429px;top:486px;">Выбракованные&nbsp;телки&nbsp;&nbsp;12-24&nbsp;мес.</div>
<div class="a t" style="left:186px;top:486px;">Ц00000008</div>
<svg class="a" style="left:158px;top:487px" width="15" height="13" viewBox="0 0 15 13" shape-rendering="crispEdges"><path d="M1 3V2h5l1 1" fill="#90e0e8" stroke="#7aa0a0"/><path d="M5 1h1l1 1v1h1" fill="none" stroke="#000" stroke-width="1"/><rect x="0.5" y="3" width="12.5" height="8.5" fill="#58d4dc" stroke="#80a8ac"/><path d="M1 4h11.5M1 3.5v7.5" stroke="#b8f4f8"/><path d="M2 6h10M3 8h8" stroke="#70e0e8"/><rect x="13" y="3" width="1.5" height="10" fill="#000"/><rect x="1" y="11.5" width="13.5" height="1.5" fill="#000"/></svg>
<div class="a t" style="left:429px;top:501px;">Выбракованные&nbsp;телки&nbsp;&nbsp;2&nbsp;-&nbsp;6&nbsp;мес</div>
<div class="a t" style="left:186px;top:501px;">Ц00000025</div>
<svg class="a" style="left:158px;top:502px" width="15" height="13" viewBox="0 0 15 13" shape-rendering="crispEdges"><path d="M1 3V2h5l1 1" fill="#90e0e8" stroke="#7aa0a0"/><path d="M5 1h1l1 1v1h1" fill="none" stroke="#000" stroke-width="1"/><rect x="0.5" y="3" width="12.5" height="8.5" fill="#58d4dc" stroke="#80a8ac"/><path d="M1 4h11.5M1 3.5v7.5" stroke="#b8f4f8"/><path d="M2 6h10M3 8h8" stroke="#70e0e8"/><rect x="13" y="3" width="1.5" height="10" fill="#000"/><rect x="1" y="11.5" width="13.5" height="1.5" fill="#000"/></svg>
<div class="a t" style="left:429px;top:516px;">Выбракованные&nbsp;телки&nbsp;0&nbsp;-&nbsp;2мес</div>
<div class="a t" style="left:186px;top:516px;">Ц00000014</div>
<svg class="a" style="left:158px;top:517px" width="15" height="13" viewBox="0 0 15 13" shape-rendering="crispEdges"><path d="M1 3V2h5l1 1" fill="#90e0e8" stroke="#7aa0a0"/><path d="M5 1h1l1 1v1h1" fill="none" stroke="#000" stroke-width="1"/><rect x="0.5" y="3" width="12.5" height="8.5" fill="#58d4dc" stroke="#80a8ac"/><path d="M1 4h11.5M1 3.5v7.5" stroke="#b8f4f8"/><path d="M2 6h10M3 8h8" stroke="#70e0e8"/><rect x="13" y="3" width="1.5" height="10" fill="#000"/><rect x="1" y="11.5" width="13.5" height="1.5" fill="#000"/></svg>
<div class="a t" style="left:429px;top:531px;">Выбракованные&nbsp;телки&nbsp;2006&nbsp;г.</div>
<div class="a t" style="left:186px;top:531px;">000000022</div>
<svg class="a" style="left:158px;top:532px" width="15" height="13" viewBox="0 0 15 13" shape-rendering="crispEdges"><path d="M1 3V2h5l1 1" fill="#90e0e8" stroke="#7aa0a0"/><path d="M5 1h1l1 1v1h1" fill="none" stroke="#000" stroke-width="1"/><rect x="0.5" y="3" width="12.5" height="8.5" fill="#58d4dc" stroke="#80a8ac"/><path d="M1 4h11.5M1 3.5v7.5" stroke="#b8f4f8"/><path d="M2 6h10M3 8h8" stroke="#70e0e8"/><rect x="13" y="3" width="1.5" height="10" fill="#000"/><rect x="1" y="11.5" width="13.5" height="1.5" fill="#000"/></svg>
<div class="a t" style="left:429px;top:546px;">Выбракованные&nbsp;телки&nbsp;2007&nbsp;г.</div>
<div class="a t" style="left:186px;top:546px;">000000030</div>
<svg class="a" style="left:158px;top:547px" width="15" height="13" viewBox="0 0 15 13" shape-rendering="crispEdges"><path d="M1 3V2h5l1 1" fill="#90e0e8" stroke="#7aa0a0"/><path d="M5 1h1l1 1v1h1" fill="none" stroke="#000" stroke-width="1"/><rect x="0.5" y="3" width="12.5" height="8.5" fill="#58d4dc" stroke="#80a8ac"/><path d="M1 4h11.5M1 3.5v7.5" stroke="#b8f4f8"/><path d="M2 6h10M3 8h8" stroke="#70e0e8"/><rect x="13" y="3" width="1.5" height="10" fill="#000"/><rect x="1" y="11.5" width="13.5" height="1.5" fill="#000"/></svg>
<div class="a t" style="left:429px;top:561px;">Выбракованные&nbsp;телочки&nbsp;2005&nbsp;г.</div>
<div class="a t" style="left:186px;top:561px;">000000012</div>
<svg class="a" style="left:158px;top:562px" width="15" height="13" viewBox="0 0 15 13" shape-rendering="crispEdges"><path d="M1 3V2h5l1 1" fill="#90e0e8" stroke="#7aa0a0"/><path d="M5 1h1l1 1v1h1" fill="none" stroke="#000" stroke-width="1"/><rect x="0.5" y="3" width="12.5" height="8.5" fill="#58d4dc" stroke="#80a8ac"/><path d="M1 4h11.5M1 3.5v7.5" stroke="#b8f4f8"/><path d="M2 6h10M3 8h8" stroke="#70e0e8"/><rect x="13" y="3" width="1.5" height="10" fill="#000"/><rect x="1" y="11.5" width="13.5" height="1.5" fill="#000"/></svg>
<div class="a" style="left:1005px;top:140px;width:16px;height:443px;background:#fbfbf9;"></div>
<div class="a" style="left:1006px;top:155px;width:1px;height:411px;background:#e4e4e0;"></div>
<div class="a" style="left:1019px;top:155px;width:1px;height:411px;background:#e8e8e4;"></div>
<div class="a" style="left:1006px;top:141px;width:14px;height:14px;background:;background:linear-gradient(135deg,#f4f4f0,#e0e0d8);border-right:1px solid #d0d0c8;border-bottom:1px solid #d0d0c8"></div>
<svg class="a" style="left:1009px;top:145px" width="8" height="5"><path d="M1 4L4 1L7 4" stroke="#404040" stroke-width="1.6" fill="none"/></svg>
<div class="a" style="left:1006px;top:198px;width:14px;height:14px;background:;background:linear-gradient(135deg,#ececE8,#dcdcd6);border-right:1px solid #d0d0c8;border-bottom:1px solid #d0d0c8"></div>
<div class="a" style="left:1006px;top:567px;width:14px;height:14px;background:;background:linear-gradient(135deg,#f4f4f0,#e0e0d8);border-right:1px solid #d0d0c8;border-bottom:1px solid #d0d0c8"></div>
<svg class="a" style="left:1009px;top:572px" width="8" height="5"><path d="M1 1L4 4L7 1" stroke="#404040" stroke-width="1.6" fill="none"/></svg>
<div class="a" style="left:1004px;top:154px;width:1px;height:3px;background:#000;"></div>
<div class="a t" style="left:9px;top:589px;color:#000080;">На 27.11.10 бухгалтерские итоги не рассчитаны!</div>
<div class="a t" style="left:9px;top:601.5px;color:#000080;">Расчет итогов выполняется в режиме</div>
<div class="a t" style="left:9px;top:614px;color:#000080;">"Операции - Управление бухгалтерскими итогами".</div>
<svg class="a" style="left:4px;top:2px" width="20" height="19" viewBox="0 0 20 19" shape-rendering="crispEdges"><path d="M2 5c2-3 8-4 14-3 2 1 2 5 1 8-1 3-6 5-11 5-4 0-6-2-5-5z" fill="#f0f000"/><path d="M2 9l4 3 12-9" fill="none" stroke="#c02040" stroke-width="2.2" /><path d="M5 8l3 3 9-7" fill="none" stroke="#2020a0" stroke-width="1.4" /><text x="10" y="18" font-family="Liberation Sans" font-weight="bold" font-size="6" fill="#000">07</text></svg>
<svg class="a" style="left:8px;top:24px" width="16" height="15" viewBox="0 0 16 15" shape-rendering="crispEdges"><rect x="1" y="1" width="13" height="13" fill="#000080"/><rect x="14" y="2" width="2" height="12" fill="#000080"/><rect x="2" y="2" width="11" height="2" fill="#000080"/><rect x="4.0" y="2" width="1" height="1" fill="#fff"/><rect x="6.5" y="2" width="1" height="1" fill="#fff"/><rect x="9.0" y="2" width="1" height="1" fill="#fff"/><rect x="11.5" y="2" width="1" height="1" fill="#fff"/><rect x="2" y="5" width="11" height="8" fill="#fff"/><rect x="3" y="5.5" width="9" height="1" fill="#000080"/><path d="M4 8h7l-2 3h-3z" fill="#e00000" stroke="none" stroke-width="1" /><rect x="4" y="11" width="7" height="1" fill="#000"/></svg>
<div class="a" style="left:981px;top:4px;width:13px;height:13px;background:#f4f4f4;border:1px solid #3c4a70;border-radius:3px;background:linear-gradient(135deg,#fafafa,#dfe3ea)"></div>
<svg class="a" style="left:981px;top:4px" width="13" height="13" viewBox="0 0 13 13" shape-rendering="crispEdges"><rect x="4" y="7" width="5" height="2" fill="#d8c8a0"/><rect x="4" y="6" width="5" height="1" fill="#a09070"/></svg>
<div class="a" style="left:997px;top:4px;width:13px;height:13px;background:#f4f4f4;border:1px solid #3c4a70;border-radius:3px;background:linear-gradient(135deg,#fafafa,#dfe3ea)"></div>
<svg class="a" style="left:997px;top:4px" width="13" height="13" viewBox="0 0 13 13" shape-rendering="crispEdges"><path d="M6.5 2.5l3.5 4h-3.5z" fill="#6a6050" stroke="none" stroke-width="1" /><path d="M6.5 10.5l-3.5-4h3.5z" fill="#6a6050" stroke="none" stroke-width="1" /><path d="M7 6.5h3" fill="none" stroke="#c8b890" stroke-width="1" /></svg>
<div class="a" style="left:1013px;top:4px;width:13px;height:13px;background:#f4f4f4;border:1px solid #3c4a70;border-radius:3px;background:linear-gradient(135deg,#fafafa,#dfe3ea)"></div>
<svg class="a" style="left:1013px;top:4px" width="13" height="13" viewBox="0 0 13 13" shape-rendering="crispEdges"><path d="M3 3l7 7M10 3l-7 7" fill="none" stroke="#8c7c64" stroke-width="1.4" /></svg>
<div class="a" style="left:976px;top:24px;width:15px;height:16px;background:#f5f4ef;border-right:1px solid #e4e2da;border-bottom:1px solid #dcdad2"></div>
<div class="a" style="left:994px;top:24px;width:15px;height:16px;background:#f5f4ef;border-right:1px solid #e4e2da;border-bottom:1px solid #dcdad2"></div>
<div class="a" style="left:1012px;top:24px;width:15px;height:16px;background:#f5f4ef;border-right:1px solid #e4e2da;border-bottom:1px solid #dcdad2"></div>
<div class="a" style="left:979px;top:33px;width:7px;height:2px;background:#505050;"></div>
<svg class="a" style="left:996px;top:26px" width="13" height="13" viewBox="0 0 13 13" shape-rendering="crispEdges"><path d="M4.5 2.5h7v5.5" fill="none" stroke="#505050" stroke-width="1.3" /><path d="M1.5 5.5h7v6h-7z" fill="none" stroke="#505050" stroke-width="1.3" /><rect x="1" y="5" width="8" height="1.6" fill="#505050"/></svg>
<svg class="a" style="left:1014px;top:26px" width="11" height="11" viewBox="0 0 11 11" shape-rendering="crispEdges"><path d="M2 2l7 7M9 2l-7 7" fill="none" stroke="#505050" stroke-width="2" /></svg>
<div class="a" style="left:20px;top:149px;width:1px;height:1px;background:#909090;"></div>
<div class="a" style="left:22px;top:149px;width:1px;height:1px;background:#909090;"></div>
<div class="a" style="left:24px;top:149px;width:1px;height:1px;background:#909090;"></div>
<div class="a" style="left:26px;top:149px;width:1px;height:1px;background:#909090;"></div>
<div class="a" style="left:28px;top:149px;width:1px;height:1px;background:#909090;"></div>
<div class="a" style="left:30px;top:149px;width:1px;height:1px;background:#909090;"></div>
<div class="a" style="left:32px;top:149px;width:1px;height:1px;background:#909090;"></div>
<svg class="a" style="left:33px;top:142px" width="16" height="14" viewBox="0 0 16 14" shape-rendering="crispEdges"><path d="M2.5 4.5c0-2.5 1-4 3-4h1.5l1.5 2h5v9.5h-11z" fill="#e4e49a" stroke="#9a9a60" stroke-width="0.9" /><path d="M1 12.5l1.5-6h12.5l-1.5 6z" fill="#d8d868" stroke="#8a8a40" stroke-width="0.8" /><rect x="4" y="9" width="9" height="1" fill="#a8a848"/><path d="M14.5 5v8h-12" fill="none" stroke="#000" stroke-width="1.5" /><path d="M0 7.5h2l1-1" fill="none" stroke="#909090" stroke-width="0.8" /></svg>
<div class="a" style="left:905px;top:647px;width:122px;height:6px;background:;background:linear-gradient(90deg,rgba(200,198,190,0),rgba(210,208,200,1) 40px);opacity:0.8"></div>
<div class="a" style="left:11px;top:649px;width:81px;height:4px;background:#fafafa;border-right:1px solid #606060;border-top:1px solid #fff"></div>
<div class="a" style="left:96px;top:649px;width:17px;height:4px;background:#fafafa;border-right:1px solid #606060"></div>
<div class="a" style="left:113px;top:649px;width:65px;height:4px;background:#fafafa;border-right:1px solid #606060"></div>
</body></html>
